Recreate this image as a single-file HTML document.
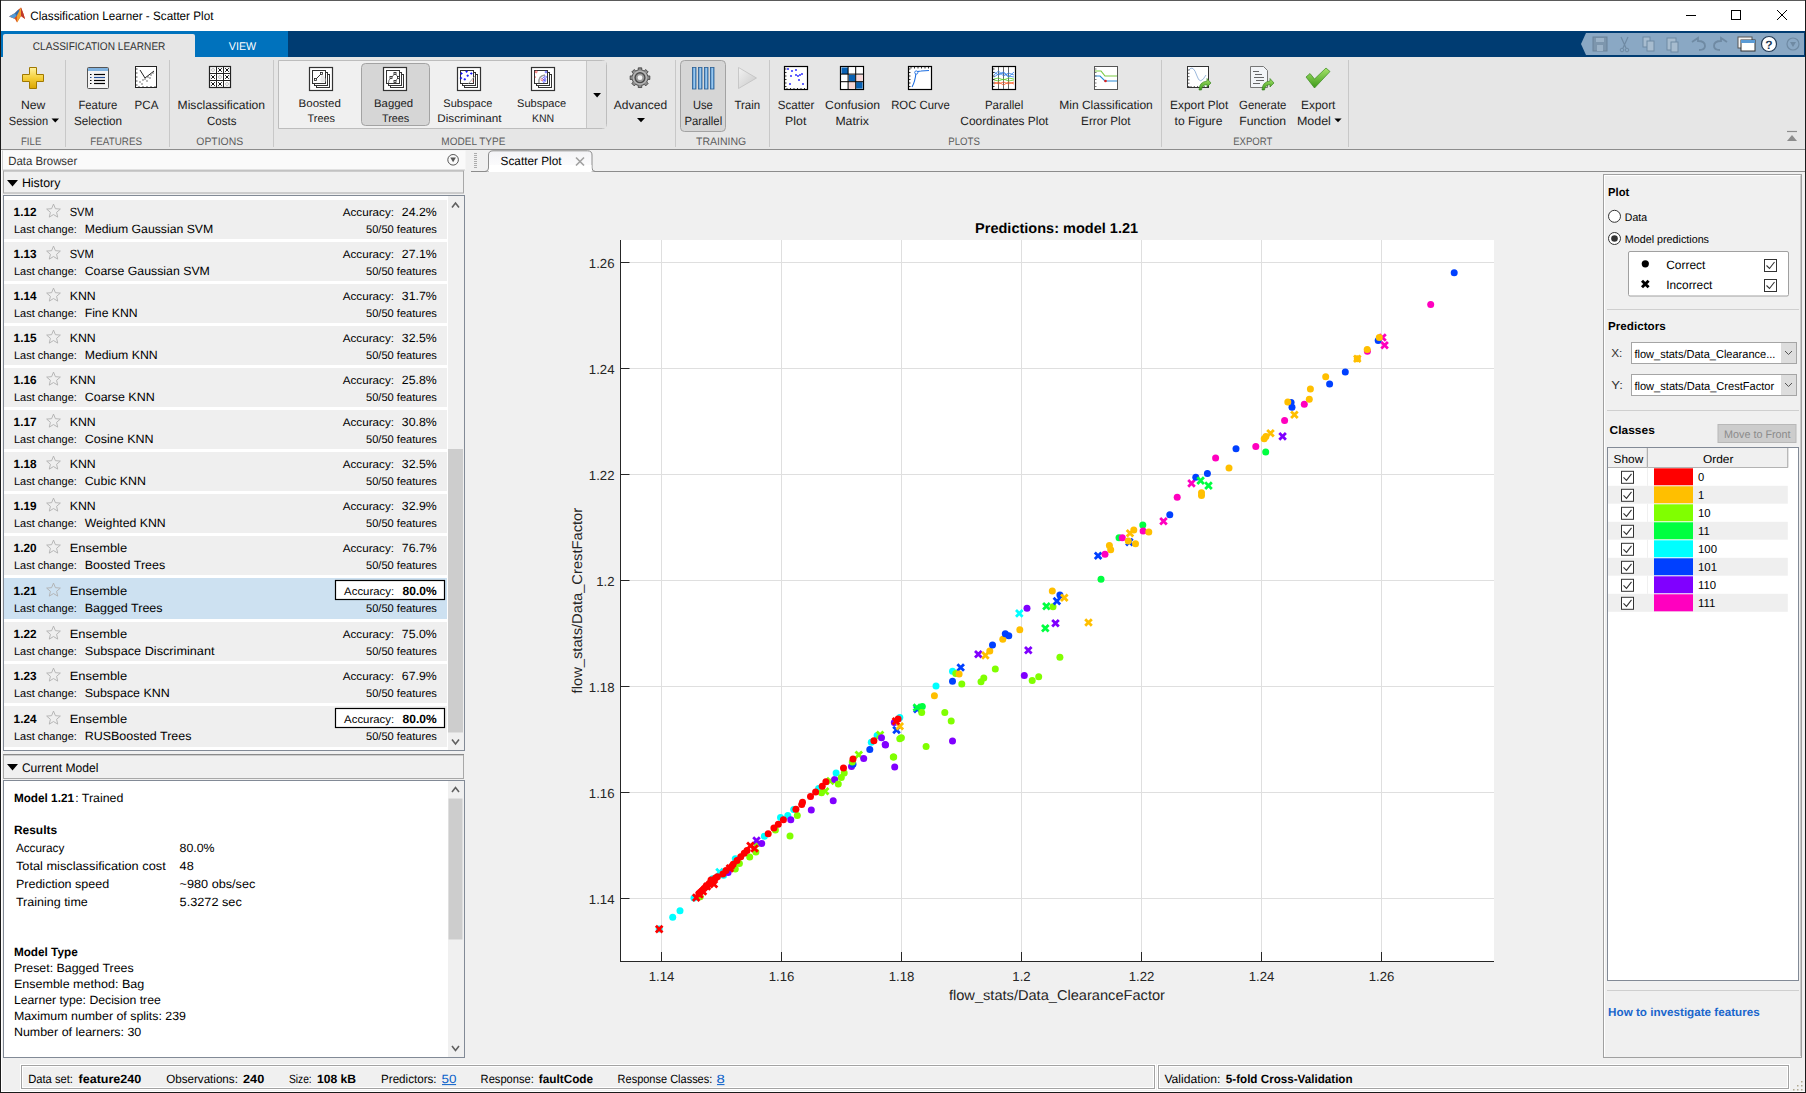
<!DOCTYPE html>
<html><head><meta charset="utf-8"><title>Classification Learner - Scatter Plot</title>
<style>html,body{margin:0;padding:0;width:1806px;height:1093px;overflow:hidden;background:#f0f0f0;font-family:"Liberation Sans",sans-serif}</style>
</head><body>
<svg width="1806" height="1093" viewBox="0 0 1806 1093" style="display:block" text-rendering="geometricPrecision">
<rect x="0" y="0" width="1806" height="1093" fill="#f0f0f0"/>
<rect x="0" y="0" width="1806" height="31" fill="#ffffff"/>
<g>
<path d="M9,16.5 L15,13 L18.5,9.5 L21,7.5 L23.5,14 L25,19 L21,16 L17,22.5 L15,19 Z" fill="#d9531e"/>
<path d="M9,16.5 L15,13 L17,15.5 L14,18.5 Z" fill="#4f9ad8"/>
<path d="M15,13 L18.5,9.5 L20,12 L16.5,16 Z" fill="#2e6fb2"/>
<path d="M21,7.5 L23.5,14 L25,19 L21,16 Z" fill="#c0392b"/>
<path d="M17,15.5 L21,7.5 L21,16 L17,22.5 Z" fill="#f0a030"/>
</g>
<text x="30.3" y="20.2" font-size="12.2" font-weight="normal" fill="#000" font-family="Liberation Sans" textLength="183.1" lengthAdjust="spacingAndGlyphs">Classification Learner - Scatter Plot</text>
<line x1="1686" y1="15.5" x2="1696" y2="15.5" stroke="#000" stroke-width="1"/>
<rect x="1731.5" y="10.5" width="9" height="9" fill="none" stroke="#000" stroke-width="1"/>
<line x1="1777" y1="10" x2="1787" y2="20" stroke="#000" stroke-width="1"/>
<line x1="1787" y1="10" x2="1777" y2="20" stroke="#000" stroke-width="1"/>
<rect x="0" y="31" width="1806" height="26" fill="#003c72"/>
<rect x="1" y="31" width="287" height="26" fill="#0072bd"/>
<path d="M3,57 L3,36 Q3,34 5,34 L193,34 Q195,34 195,36 L195,57 Z" fill="#e6e6e6"/>
<text x="32.8" y="49.9" font-size="11.2" font-weight="normal" fill="#333333" font-family="Liberation Sans" textLength="132.6" lengthAdjust="spacingAndGlyphs">CLASSIFICATION LEARNER</text>
<text x="228.8" y="49.9" font-size="11.2" font-weight="normal" fill="#ffffff" font-family="Liberation Sans" textLength="27.4" lengthAdjust="spacingAndGlyphs">VIEW</text>
<path d="M1581,44 L1586,33 L1804,33 L1804,55 L1586,55 Z" fill="#8aa8c4"/>
<rect x="1593" y="37" width="14" height="14" fill="#7d96ad" stroke="#6a8299" stroke-width="1"/>
<rect x="1596" y="38" width="8" height="4" fill="#9bb2c7"/>
<rect x="1597" y="45" width="6" height="6" fill="#9bb2c7"/>
<path d="M1621,37 L1626,48 M1628,37 L1623,48" fill="none" stroke="#6f8aa3" stroke-width="1.2"/>
<circle cx="1622" cy="50" r="1.8" fill="none" stroke="#6f8aa3" stroke-width="1"/>
<circle cx="1627" cy="50" r="1.8" fill="none" stroke="#6f8aa3" stroke-width="1"/>
<rect x="1643" y="37" width="7" height="10" fill="#a7bccf" stroke="#6f8aa3" stroke-width="1"/>
<rect x="1647" y="41" width="7" height="10" fill="#a7bccf" stroke="#6f8aa3" stroke-width="1"/>
<rect x="1667" y="38" width="9" height="12" fill="#a7bccf" stroke="#6f8aa3" stroke-width="1"/>
<rect x="1671" y="42" width="7" height="10" fill="#a7bccf" stroke="#6f8aa3" stroke-width="1"/>
<path d="M1692,42 L1698,38 L1698,41 Q1705,41 1705,46 Q1705,50 1699,50" fill="none" stroke="#6f8aa3" stroke-width="1.8"/>
<path d="M1727,42 L1721,38 L1721,41 Q1714,41 1714,46 Q1714,50 1720,50" fill="none" stroke="#6f8aa3" stroke-width="1.8"/>
<rect x="1738" y="37" width="14" height="11" fill="#f4f4f4" stroke="#555" stroke-width="1"/>
<rect x="1741" y="40" width="14" height="11" fill="#ffffff" stroke="#333" stroke-width="1"/>
<rect x="1741" y="40" width="14" height="3" fill="#5b9bd5"/>
<circle cx="1769" cy="44" r="7.5" fill="#ffffff" stroke="#223a55" stroke-width="1.2"/>
<text x="1769.0" y="48.5" font-size="12" font-weight="bold" fill="#223a55" font-family="Liberation Sans" text-anchor="middle">?</text>
<circle cx="1793" cy="44" r="6" fill="none" stroke="#6f8aa3" stroke-width="1.2"/>
<path d="M1790,42 L1796,42 L1793,47 Z" fill="#6f8aa3"/>
<rect x="0.5" y="0.5" width="1805" height="1092" fill="none" stroke="#555555" stroke-width="1"/>
<rect x="1" y="57" width="1804" height="92" fill="#e6e6e6"/>
<line x1="1" y1="149.5" x2="1805" y2="149.5" stroke="#8c8c8c" stroke-width="1"/>
<line x1="65.5" y1="60" x2="65.5" y2="147" stroke="#c8c8c8" stroke-width="1"/>
<line x1="169.5" y1="60" x2="169.5" y2="147" stroke="#c8c8c8" stroke-width="1"/>
<line x1="273.5" y1="60" x2="273.5" y2="147" stroke="#c8c8c8" stroke-width="1"/>
<line x1="675.5" y1="60" x2="675.5" y2="147" stroke="#c8c8c8" stroke-width="1"/>
<line x1="769.5" y1="60" x2="769.5" y2="147" stroke="#c8c8c8" stroke-width="1"/>
<line x1="1161.5" y1="60" x2="1161.5" y2="147" stroke="#c8c8c8" stroke-width="1"/>
<line x1="1348.5" y1="60" x2="1348.5" y2="147" stroke="#c8c8c8" stroke-width="1"/>
<text x="21.0" y="144.7" font-size="10.8" font-weight="normal" fill="#5c5c5c" font-family="Liberation Sans" textLength="20.3" lengthAdjust="spacingAndGlyphs">FILE</text>
<text x="90.3" y="144.7" font-size="10.8" font-weight="normal" fill="#5c5c5c" font-family="Liberation Sans" textLength="51.7" lengthAdjust="spacingAndGlyphs">FEATURES</text>
<text x="196.3" y="144.7" font-size="10.8" font-weight="normal" fill="#5c5c5c" font-family="Liberation Sans" textLength="46.9" lengthAdjust="spacingAndGlyphs">OPTIONS</text>
<text x="441.3" y="144.7" font-size="10.8" font-weight="normal" fill="#5c5c5c" font-family="Liberation Sans" textLength="64.1" lengthAdjust="spacingAndGlyphs">MODEL TYPE</text>
<text x="696.0" y="144.7" font-size="10.8" font-weight="normal" fill="#5c5c5c" font-family="Liberation Sans" textLength="50.2" lengthAdjust="spacingAndGlyphs">TRAINING</text>
<text x="948.2" y="144.7" font-size="10.8" font-weight="normal" fill="#5c5c5c" font-family="Liberation Sans" textLength="31.7" lengthAdjust="spacingAndGlyphs">PLOTS</text>
<text x="1233.2" y="144.7" font-size="10.8" font-weight="normal" fill="#5c5c5c" font-family="Liberation Sans" textLength="39.2" lengthAdjust="spacingAndGlyphs">EXPORT</text>
<defs><linearGradient id="gPlus" x1="0" y1="0" x2="0" y2="1"><stop offset="0" stop-color="#fff3a0"/><stop offset="0.5" stop-color="#f5cf3a"/><stop offset="1" stop-color="#d9a400"/></linearGradient><linearGradient id="gBar" x1="0" y1="0" x2="1" y2="0"><stop offset="0" stop-color="#3a7fc0"/><stop offset="0.5" stop-color="#a9d3f5"/><stop offset="1" stop-color="#3a7fc0"/></linearGradient><linearGradient id="gCheck" x1="0" y1="0" x2="0" y2="1"><stop offset="0" stop-color="#a6e36a"/><stop offset="1" stop-color="#3d9a1a"/></linearGradient><radialGradient id="gGear"><stop offset="0.25" stop-color="#eee"/><stop offset="0.45" stop-color="#555"/><stop offset="0.7" stop-color="#999"/><stop offset="1" stop-color="#666"/></radialGradient></defs>
<path d="M29.5,67.5 L36.5,67.5 L36.5,74.5 L43.5,74.5 L43.5,81.5 L36.5,81.5 L36.5,88.5 L29.5,88.5 L29.5,81.5 L22.5,81.5 L22.5,74.5 L29.5,74.5 Z" fill="url(#gPlus)" stroke="#a07800" stroke-width="1"/>
<text x="21.0" y="108.8" font-size="12" font-weight="normal" fill="#222222" font-family="Liberation Sans" textLength="24.3" lengthAdjust="spacingAndGlyphs">New</text>
<text x="8.8" y="124.8" font-size="12" font-weight="normal" fill="#222222" font-family="Liberation Sans" textLength="39.3" lengthAdjust="spacingAndGlyphs">Session</text>
<path d="M51.5,118.5 L59,118.5 L55.25,122.5 Z" fill="#000"/>
<rect x="87.5" y="67.5" width="21" height="21" fill="#f4f4f4" stroke="#555" stroke-width="1" rx="1"/>
<rect x="88" y="68" width="20" height="3" fill="#7fb2e0"/>
<line x1="90" y1="74.5" x2="91.5" y2="74.5" stroke="#000" stroke-width="1"/>
<line x1="94" y1="74.5" x2="105" y2="74.5" stroke="#000" stroke-width="1.2"/>
<line x1="90" y1="77.5" x2="91.5" y2="77.5" stroke="#1f4e9a" stroke-width="1"/>
<line x1="94" y1="77.5" x2="105" y2="77.5" stroke="#1f4e9a" stroke-width="1.2"/>
<line x1="90" y1="80.5" x2="91.5" y2="80.5" stroke="#000" stroke-width="1"/>
<line x1="94" y1="80.5" x2="105" y2="80.5" stroke="#000" stroke-width="1.2"/>
<line x1="90" y1="83.5" x2="91.5" y2="83.5" stroke="#000" stroke-width="1"/>
<line x1="94" y1="83.5" x2="105" y2="83.5" stroke="#000" stroke-width="1.2"/>
<text x="78.4" y="108.8" font-size="12" font-weight="normal" fill="#222222" font-family="Liberation Sans" textLength="39.0" lengthAdjust="spacingAndGlyphs">Feature</text>
<text x="73.9" y="124.8" font-size="12" font-weight="normal" fill="#222222" font-family="Liberation Sans" textLength="48.1" lengthAdjust="spacingAndGlyphs">Selection</text>
<rect x="135.5" y="66.5" width="21" height="21" fill="#ffffff" stroke="#222" stroke-width="1"/>
<line x1="136" y1="69" x2="137.5" y2="69" stroke="#222" stroke-width="0.8"/>
<line x1="139" y1="86" x2="139" y2="87.5" stroke="#222" stroke-width="0.8"/>
<line x1="136" y1="73" x2="137.5" y2="73" stroke="#222" stroke-width="0.8"/>
<line x1="143" y1="86" x2="143" y2="87.5" stroke="#222" stroke-width="0.8"/>
<line x1="136" y1="77" x2="137.5" y2="77" stroke="#222" stroke-width="0.8"/>
<line x1="147" y1="86" x2="147" y2="87.5" stroke="#222" stroke-width="0.8"/>
<line x1="136" y1="81" x2="137.5" y2="81" stroke="#222" stroke-width="0.8"/>
<line x1="151" y1="86" x2="151" y2="87.5" stroke="#222" stroke-width="0.8"/>
<line x1="136" y1="85" x2="137.5" y2="85" stroke="#222" stroke-width="0.8"/>
<line x1="155" y1="86" x2="155" y2="87.5" stroke="#222" stroke-width="0.8"/>
<circle cx="140" cy="82" r="0.9" fill="#9a9a9a"/>
<circle cx="143" cy="80" r="0.9" fill="#9a9a9a"/>
<circle cx="145" cy="79" r="0.9" fill="#9a9a9a"/>
<circle cx="148" cy="77" r="0.9" fill="#9a9a9a"/>
<circle cx="151" cy="75" r="0.9" fill="#9a9a9a"/>
<circle cx="142" cy="84" r="0.9" fill="#9a9a9a"/>
<circle cx="147" cy="81" r="0.9" fill="#9a9a9a"/>
<circle cx="150" cy="78" r="0.9" fill="#9a9a9a"/>
<circle cx="153" cy="73" r="0.9" fill="#9a9a9a"/>
<path d="M140,70 L145,78 L154,71" fill="none" stroke="#222" stroke-width="1"/>
<text x="134.6" y="108.8" font-size="12" font-weight="normal" fill="#222222" font-family="Liberation Sans" textLength="23.8" lengthAdjust="spacingAndGlyphs">PCA</text>
<rect x="209.5" y="66.5" width="21" height="21" fill="#ffffff" stroke="#222" stroke-width="1.2"/>
<line x1="216.5" y1="66.5" x2="216.5" y2="87.5" stroke="#222" stroke-width="1"/>
<line x1="209.5" y1="73.5" x2="230.5" y2="73.5" stroke="#222" stroke-width="1"/>
<line x1="223.5" y1="66.5" x2="223.5" y2="87.5" stroke="#222" stroke-width="1"/>
<line x1="209.5" y1="80.5" x2="230.5" y2="80.5" stroke="#222" stroke-width="1"/>
<circle cx="213" cy="70" r="1.5" fill="none" stroke="#aaa" stroke-width="0.7"/>
<path d="M218.2,68.2 L221.8,71.8 M221.8,68.2 L218.2,71.8" fill="none" stroke="#111" stroke-width="1"/>
<path d="M225.2,68.2 L228.8,71.8 M228.8,68.2 L225.2,71.8" fill="none" stroke="#111" stroke-width="1"/>
<path d="M211.2,75.2 L214.8,78.8 M214.8,75.2 L211.2,78.8" fill="none" stroke="#111" stroke-width="1"/>
<circle cx="220" cy="77" r="1.5" fill="none" stroke="#aaa" stroke-width="0.7"/>
<path d="M225.2,75.2 L228.8,78.8 M228.8,75.2 L225.2,78.8" fill="none" stroke="#111" stroke-width="1"/>
<path d="M211.2,82.2 L214.8,85.8 M214.8,82.2 L211.2,85.8" fill="none" stroke="#111" stroke-width="1"/>
<path d="M218.2,82.2 L221.8,85.8 M221.8,82.2 L218.2,85.8" fill="none" stroke="#111" stroke-width="1"/>
<circle cx="227" cy="84" r="1.5" fill="none" stroke="#aaa" stroke-width="0.7"/>
<text x="177.6" y="108.8" font-size="12" font-weight="normal" fill="#222222" font-family="Liberation Sans" textLength="87.5" lengthAdjust="spacingAndGlyphs">Misclassification</text>
<text x="207.0" y="124.8" font-size="12" font-weight="normal" fill="#222222" font-family="Liberation Sans" textLength="29.4" lengthAdjust="spacingAndGlyphs">Costs</text>
<path d="M278.5,128.5 L278.5,60.5 L602.5,60.5 Q606.5,60.5 606.5,64.5 L606.5,124.5 Q606.5,128.5 602.5,128.5 Z" fill="#f0f0f0" stroke="#bdbdbd" stroke-width="1"/>
<rect x="586.5" y="61" width="19.5" height="67" fill="#e4e4e4"/>
<line x1="586.5" y1="61" x2="586.5" y2="128" stroke="#c6c6c6" stroke-width="1"/>
<path d="M593.2,93 L601,93 L597.1,97.4 Z" fill="#000"/>
<rect x="361.5" y="63.5" width="68" height="62" fill="#d6d6d6" stroke="#a3a3a3" stroke-width="1" rx="4"/>
<rect x="309.5" y="67.5" width="23" height="23" fill="#ffffff" stroke="#333" stroke-width="1.2"/>
<rect x="316.5" y="74.5" width="13" height="13" fill="#ffffff" stroke="#333" stroke-width="1"/>
<rect x="314.5" y="72.5" width="13" height="13" fill="#ffffff" stroke="#333" stroke-width="1"/>
<rect x="312.5" y="70.5" width="13" height="13" fill="#ffffff" stroke="#333" stroke-width="1"/>
<path d="M321.5,74.5 Q326,76 325.5,81.5 L322,82.5 Q319,81 321.5,74.5 Z" fill="#e9e9e9"/>
<line x1="315.5" y1="79.5" x2="321.5" y2="73.5" stroke="#222" stroke-width="0.9"/>
<rect x="314.5" y="78.5" width="2" height="2" fill="#fff" stroke="#222" stroke-width="0.8"/>
<rect x="320.5" y="72.5" width="2" height="2" fill="#fff" stroke="#222" stroke-width="0.8"/>
<rect x="383.5" y="67.5" width="23" height="23" fill="#ffffff" stroke="#333" stroke-width="1.2"/>
<rect x="390.5" y="74.5" width="13" height="13" fill="#ffffff" stroke="#333" stroke-width="1"/>
<rect x="388.5" y="72.5" width="13" height="13" fill="#ffffff" stroke="#333" stroke-width="1"/>
<rect x="386.5" y="70.5" width="13" height="13" fill="#ffffff" stroke="#333" stroke-width="1"/>
<path d="M391.5,77.5 L395,73.5 L398.5,77.5 L395,81.5 M391.5,77.5 Q388,80 388.5,83" fill="none" stroke="#333" stroke-width="0.7"/>
<rect x="390" y="76.5" width="2" height="2" fill="#fff" stroke="#222" stroke-width="0.8"/>
<rect x="394" y="72.5" width="2" height="2" fill="#fff" stroke="#222" stroke-width="0.8"/>
<rect x="397.5" y="76.5" width="2" height="2" fill="#fff" stroke="#222" stroke-width="0.8"/>
<rect x="394" y="80.5" width="2" height="2" fill="#fff" stroke="#222" stroke-width="0.8"/>
<rect x="457.5" y="67.5" width="23" height="23" fill="#ffffff" stroke="#333" stroke-width="1.2"/>
<rect x="464.5" y="74.5" width="13" height="13" fill="#ffffff" stroke="#333" stroke-width="1"/>
<rect x="462.5" y="72.5" width="13" height="13" fill="#ffffff" stroke="#333" stroke-width="1"/>
<rect x="460.5" y="70.5" width="13" height="13" fill="#ffffff" stroke="#333" stroke-width="1"/>
<path d="M468.5,83.5 L475,76" fill="none" stroke="#aaa" stroke-width="1"/>
<path d="M465.40000000000003,71.6 L467.8,71.6 M466.6,70.39999999999999 L466.6,72.8" fill="none" stroke="#1010ff" stroke-width="0.9"/>
<path d="M470.1,73.5 L472.5,73.5 M471.3,72.3 L471.3,74.7" fill="none" stroke="#1010ff" stroke-width="0.9"/>
<path d="M466.5,75.7 L468.9,75.7 M467.7,74.5 L467.7,76.9" fill="none" stroke="#1010ff" stroke-width="0.9"/>
<path d="M460.3,73.5 L462.7,73.5 M461.5,72.3 L461.5,74.7" fill="none" stroke="#1010ff" stroke-width="0.9"/>
<path d="M463.6,79.3 L466.0,79.3 M464.8,78.1 L464.8,80.5" fill="none" stroke="#1010ff" stroke-width="0.9"/>
<path d="M459.8,78.1 L462.2,78.1 M461,76.89999999999999 L461,79.3" fill="none" stroke="#1010ff" stroke-width="0.9"/>
<circle cx="473" cy="81" r="0.6" fill="#e33"/>
<rect x="531.5" y="67.5" width="23" height="23" fill="#ffffff" stroke="#333" stroke-width="1.2"/>
<rect x="538.5" y="74.5" width="13" height="13" fill="#ffffff" stroke="#333" stroke-width="1"/>
<rect x="536.5" y="72.5" width="13" height="13" fill="#ffffff" stroke="#333" stroke-width="1"/>
<rect x="534.5" y="70.5" width="13" height="13" fill="#ffffff" stroke="#333" stroke-width="1"/>
<path d="M539,83 Q538,76 545,75" fill="none" stroke="#999" stroke-width="1.3"/>
<path d="M543.5,77.3 L544.7,78.5 L543.5,79.7 L542.3,78.5 Z" fill="none" stroke="#1a1aff" stroke-width="0.6"/>
<path d="M545,78.8 L546.2,80 L545,81.2 L543.8,80 Z" fill="none" stroke="#1a1aff" stroke-width="0.6"/>
<path d="M544,80.3 L545.2,81.5 L544,82.7 L542.8,81.5 Z" fill="none" stroke="#1a1aff" stroke-width="0.6"/>
<path d="M545.5,75.8 L546.7,77 L545.5,78.2 L544.3,77 Z" fill="none" stroke="#1a1aff" stroke-width="0.6"/>
<path d="M542,78.5 L543.2,79.7 L542,80.9 L540.8,79.7 Z" fill="none" stroke="#e33" stroke-width="0.6"/>
<circle cx="536.2" cy="71.8" r="1" fill="none" stroke="#e33" stroke-width="0.7"/>
<circle cx="546" cy="72" r="0.9" fill="none" stroke="#1a1aff" stroke-width="0.6"/>
<circle cx="535.5" cy="77" r="0.6" fill="#e33"/>
<text x="298.6" y="106.9" font-size="11" font-weight="normal" fill="#222222" font-family="Liberation Sans" textLength="42.3" lengthAdjust="spacingAndGlyphs">Boosted</text>
<text x="307.6" y="121.8" font-size="11" font-weight="normal" fill="#222222" font-family="Liberation Sans" textLength="27.3" lengthAdjust="spacingAndGlyphs">Trees</text>
<text x="374.0" y="106.9" font-size="11" font-weight="normal" fill="#222222" font-family="Liberation Sans" textLength="39.2" lengthAdjust="spacingAndGlyphs">Bagged</text>
<text x="382.0" y="121.8" font-size="11" font-weight="normal" fill="#222222" font-family="Liberation Sans" textLength="27.2" lengthAdjust="spacingAndGlyphs">Trees</text>
<text x="443.3" y="106.9" font-size="11" font-weight="normal" fill="#222222" font-family="Liberation Sans" textLength="49.1" lengthAdjust="spacingAndGlyphs">Subspace</text>
<text x="437.3" y="121.8" font-size="11" font-weight="normal" fill="#222222" font-family="Liberation Sans" textLength="64.1" lengthAdjust="spacingAndGlyphs">Discriminant</text>
<text x="517.0" y="106.9" font-size="11" font-weight="normal" fill="#222222" font-family="Liberation Sans" textLength="49.2" lengthAdjust="spacingAndGlyphs">Subspace</text>
<text x="532.0" y="121.8" font-size="11" font-weight="normal" fill="#222222" font-family="Liberation Sans" textLength="22.2" lengthAdjust="spacingAndGlyphs">KNN</text>
<g>
<path d="M649.84,75.91 L649.84,79.49 L647.82,79.39 L646.72,82.04 L648.22,83.39 L645.69,85.92 L644.34,84.42 L641.69,85.52 L641.79,87.54 L638.21,87.54 L638.31,85.52 L635.66,84.42 L634.31,85.92 L631.78,83.39 L633.28,82.04 L632.18,79.39 L630.16,79.49 L630.16,75.91 L632.18,76.01 L633.28,73.36 L631.78,72.01 L634.31,69.48 L635.66,70.98 L638.31,69.88 L638.21,67.86 L641.79,67.86 L641.69,69.88 L644.34,70.98 L645.69,69.48 L648.22,72.01 L646.72,73.36 L647.82,76.01 Z" fill="#8a8a8a" stroke="#3a3a3a" stroke-width="0.8"/>
<circle cx="640" cy="77.7" r="7.2" fill="#b5b5b5"/>
<circle cx="640" cy="77.7" r="5.6" fill="#4a4a4a"/>
<circle cx="640" cy="77.7" r="4.2" fill="#9a9a9a"/>
<circle cx="640" cy="77.7" r="2.4" fill="#f2f2f2"/>
</g>
<text x="613.8" y="108.8" font-size="12" font-weight="normal" fill="#222222" font-family="Liberation Sans" textLength="53.3" lengthAdjust="spacingAndGlyphs">Advanced</text>
<path d="M637,118 L645,118 L641,122.3 Z" fill="#000"/>
<rect x="680.5" y="60.5" width="45" height="71" fill="#d6d6d6" stroke="#a3a3a3" stroke-width="1" rx="4"/>
<rect x="692.5" y="67.5" width="3.5" height="21.5" fill="url(#gBar)" stroke="#2a5f95" stroke-width="0.8"/>
<rect x="698.5" y="67.5" width="3.5" height="21.5" fill="url(#gBar)" stroke="#2a5f95" stroke-width="0.8"/>
<rect x="704.5" y="67.5" width="3.5" height="21.5" fill="url(#gBar)" stroke="#2a5f95" stroke-width="0.8"/>
<rect x="710.5" y="67.5" width="3.5" height="21.5" fill="url(#gBar)" stroke="#2a5f95" stroke-width="0.8"/>
<text x="693.0" y="108.8" font-size="12" font-weight="normal" fill="#222222" font-family="Liberation Sans" textLength="19.8" lengthAdjust="spacingAndGlyphs">Use</text>
<text x="684.4" y="124.8" font-size="12" font-weight="normal" fill="#222222" font-family="Liberation Sans" textLength="37.8" lengthAdjust="spacingAndGlyphs">Parallel</text>
<defs><linearGradient id="gTri" x1="0" y1="0" x2="1" y2="1"><stop offset="0" stop-color="#f2f2f2"/><stop offset="1" stop-color="#c8c8c8"/></linearGradient></defs>
<path d="M738.5,67.5 L756.5,78 L738.5,88.5 Z" fill="url(#gTri)" stroke="#c0c0c0" stroke-width="0.8"/>
<text x="734.4" y="108.8" font-size="12" font-weight="normal" fill="#222222" font-family="Liberation Sans" textLength="25.7" lengthAdjust="spacingAndGlyphs">Train</text>
<rect x="784.5" y="66.5" width="23" height="23" fill="#ffffff" stroke="#000" stroke-width="1.2"/>
<line x1="785" y1="69.0" x2="786.5" y2="69.0" stroke="#000" stroke-width="0.8"/>
<line x1="787.0" y1="88" x2="787.0" y2="89.5" stroke="#000" stroke-width="0.8"/>
<line x1="785" y1="72.5" x2="786.5" y2="72.5" stroke="#000" stroke-width="0.8"/>
<line x1="790.5" y1="88" x2="790.5" y2="89.5" stroke="#000" stroke-width="0.8"/>
<line x1="785" y1="76.0" x2="786.5" y2="76.0" stroke="#000" stroke-width="0.8"/>
<line x1="794.0" y1="88" x2="794.0" y2="89.5" stroke="#000" stroke-width="0.8"/>
<line x1="785" y1="79.5" x2="786.5" y2="79.5" stroke="#000" stroke-width="0.8"/>
<line x1="797.5" y1="88" x2="797.5" y2="89.5" stroke="#000" stroke-width="0.8"/>
<line x1="785" y1="83.0" x2="786.5" y2="83.0" stroke="#000" stroke-width="0.8"/>
<line x1="801.0" y1="88" x2="801.0" y2="89.5" stroke="#000" stroke-width="0.8"/>
<line x1="785" y1="86.5" x2="786.5" y2="86.5" stroke="#000" stroke-width="0.8"/>
<line x1="804.5" y1="88" x2="804.5" y2="89.5" stroke="#000" stroke-width="0.8"/>
<circle cx="788" cy="69" r="0.9" fill="#1a1aff"/>
<circle cx="792" cy="71" r="0.9" fill="#1a1aff"/>
<circle cx="796" cy="70" r="0.9" fill="#1a1aff"/>
<circle cx="791" cy="76" r="0.9" fill="#1a1aff"/>
<circle cx="796" cy="75" r="0.9" fill="#1a1aff"/>
<circle cx="798" cy="76" r="0.9" fill="#1a1aff"/>
<circle cx="800" cy="75" r="0.9" fill="#1a1aff"/>
<circle cx="802" cy="74" r="0.9" fill="#1a1aff"/>
<circle cx="799" cy="80" r="0.9" fill="#1a1aff"/>
<circle cx="790" cy="84" r="0.9" fill="#1a1aff"/>
<circle cx="803" cy="84" r="0.9" fill="#1a1aff"/>
<text x="777.8" y="108.8" font-size="12" font-weight="normal" fill="#222222" font-family="Liberation Sans" textLength="36.6" lengthAdjust="spacingAndGlyphs">Scatter</text>
<text x="785.1" y="124.8" font-size="12" font-weight="normal" fill="#222222" font-family="Liberation Sans" textLength="21.3" lengthAdjust="spacingAndGlyphs">Plot</text>
<rect x="840.5" y="66.5" width="23" height="23" fill="#ffffff" stroke="#000" stroke-width="1.2"/>
<rect x="841.5" y="67.5" width="6.5" height="6.5" fill="#0a62b4"/>
<rect x="848.8" y="67.5" width="6.5" height="6.5" fill="#fff"/>
<rect x="856.1" y="67.5" width="6.5" height="6.5" fill="#fff"/>
<rect x="841.5" y="74.8" width="6.5" height="6.5" fill="#fff"/>
<rect x="848.8" y="74.8" width="6.5" height="6.5" fill="#0a62b4"/>
<rect x="856.1" y="74.8" width="6.5" height="6.5" fill="#f8d7d7"/>
<rect x="841.5" y="82.1" width="6.5" height="6.5" fill="#fff"/>
<rect x="848.8" y="82.1" width="6.5" height="6.5" fill="#f8d7d7"/>
<rect x="856.1" y="82.1" width="6.5" height="6.5" fill="#0a62b4"/>
<line x1="848.1" y1="66.5" x2="848.1" y2="89.5" stroke="#000" stroke-width="1"/>
<line x1="840.5" y1="74.1" x2="863.5" y2="74.1" stroke="#000" stroke-width="1"/>
<line x1="855.7" y1="66.5" x2="855.7" y2="89.5" stroke="#000" stroke-width="1"/>
<line x1="840.5" y1="81.7" x2="863.5" y2="81.7" stroke="#000" stroke-width="1"/>
<text x="825.1" y="108.8" font-size="12" font-weight="normal" fill="#222222" font-family="Liberation Sans" textLength="54.9" lengthAdjust="spacingAndGlyphs">Confusion</text>
<text x="835.4" y="124.8" font-size="12" font-weight="normal" fill="#222222" font-family="Liberation Sans" textLength="33.4" lengthAdjust="spacingAndGlyphs">Matrix</text>
<rect x="908.5" y="66.5" width="23" height="23" fill="#ffffff" stroke="#000" stroke-width="1.2"/>
<line x1="909" y1="69.0" x2="910.5" y2="69.0" stroke="#000" stroke-width="0.8"/>
<line x1="911.0" y1="67" x2="911.0" y2="68.5" stroke="#000" stroke-width="0.8"/>
<line x1="909" y1="72.5" x2="910.5" y2="72.5" stroke="#000" stroke-width="0.8"/>
<line x1="914.5" y1="67" x2="914.5" y2="68.5" stroke="#000" stroke-width="0.8"/>
<line x1="909" y1="76.0" x2="910.5" y2="76.0" stroke="#000" stroke-width="0.8"/>
<line x1="918.0" y1="67" x2="918.0" y2="68.5" stroke="#000" stroke-width="0.8"/>
<line x1="909" y1="79.5" x2="910.5" y2="79.5" stroke="#000" stroke-width="0.8"/>
<line x1="921.5" y1="67" x2="921.5" y2="68.5" stroke="#000" stroke-width="0.8"/>
<line x1="909" y1="83.0" x2="910.5" y2="83.0" stroke="#000" stroke-width="0.8"/>
<line x1="925.0" y1="67" x2="925.0" y2="68.5" stroke="#000" stroke-width="0.8"/>
<line x1="909" y1="86.5" x2="910.5" y2="86.5" stroke="#000" stroke-width="0.8"/>
<line x1="928.5" y1="67" x2="928.5" y2="68.5" stroke="#000" stroke-width="0.8"/>
<path d="M912,87 Q915,82 916,73 Q917,71 921,71 L929,70.5" fill="none" stroke="#1f6fe0" stroke-width="1.1"/>
<circle cx="916.3" cy="72.5" r="1.6" fill="#fff" stroke="#1f6fe0" stroke-width="0.9"/>
<text x="891.2" y="108.8" font-size="12" font-weight="normal" fill="#222222" font-family="Liberation Sans" textLength="58.5" lengthAdjust="spacingAndGlyphs">ROC Curve</text>
<rect x="992.5" y="66.5" width="23" height="23" fill="#ffffff" stroke="#000" stroke-width="1.2"/>
<line x1="998.5" y1="67" x2="998.5" y2="89" stroke="#555" stroke-width="0.9"/>
<line x1="1003.5" y1="67" x2="1003.5" y2="89" stroke="#555" stroke-width="0.9"/>
<line x1="1008.5" y1="67" x2="1008.5" y2="89" stroke="#555" stroke-width="0.9"/>
<path d="M994,72 L998.5,75 L1003.5,73 L1008.5,77 L1014,72" fill="none" stroke="#2f7fe8" stroke-width="0.8"/>
<path d="M994,75 L998.5,71 L1003.5,76 L1008.5,73 L1014,75" fill="none" stroke="#2f7fe8" stroke-width="0.8"/>
<path d="M994,77 L998.5,74 L1003.5,72 L1008.5,76 L1014,77" fill="none" stroke="#2f7fe8" stroke-width="0.8"/>
<path d="M994,79 L998.5,78 L1003.5,80 L1008.5,78 L1014,79" fill="none" stroke="#5ccf2e" stroke-width="0.8"/>
<path d="M994,80 L998.5,81 L1003.5,79 L1008.5,81 L1014,80" fill="none" stroke="#5ccf2e" stroke-width="0.8"/>
<path d="M994,82 L998.5,84 L1003.5,82 L1008.5,84 L1014,82" fill="none" stroke="#ff5a1f" stroke-width="0.8"/>
<path d="M994,84 L998.5,82 L1003.5,85 L1008.5,82 L1014,84" fill="none" stroke="#ff5a1f" stroke-width="0.8"/>
<line x1="993" y1="69.0" x2="994.5" y2="69.0" stroke="#000" stroke-width="0.8"/>
<line x1="993" y1="72.5" x2="994.5" y2="72.5" stroke="#000" stroke-width="0.8"/>
<line x1="993" y1="76.0" x2="994.5" y2="76.0" stroke="#000" stroke-width="0.8"/>
<line x1="993" y1="79.5" x2="994.5" y2="79.5" stroke="#000" stroke-width="0.8"/>
<line x1="993" y1="83.0" x2="994.5" y2="83.0" stroke="#000" stroke-width="0.8"/>
<line x1="993" y1="86.5" x2="994.5" y2="86.5" stroke="#000" stroke-width="0.8"/>
<text x="984.9" y="108.8" font-size="12" font-weight="normal" fill="#222222" font-family="Liberation Sans" textLength="38.3" lengthAdjust="spacingAndGlyphs">Parallel</text>
<text x="960.3" y="124.6" font-size="12" font-weight="normal" fill="#222222" font-family="Liberation Sans" textLength="88.1" lengthAdjust="spacingAndGlyphs">Coordinates Plot</text>
<rect x="1094.5" y="66.5" width="23" height="23" fill="#ffffff" stroke="#555" stroke-width="1"/>
<path d="M1095,71 L1101,71 L1105,76 L1117,76" fill="none" stroke="#7ac943" stroke-width="1.2"/>
<path d="M1095,76 L1100,76 L1105,81 L1117,81" fill="none" stroke="#2a8ad4" stroke-width="1.2"/>
<circle cx="1105.5" cy="81" r="1.3" fill="#d22"/>
<line x1="1095" y1="69.0" x2="1096.5" y2="69.0" stroke="#555" stroke-width="0.8"/>
<line x1="1095" y1="72.5" x2="1096.5" y2="72.5" stroke="#555" stroke-width="0.8"/>
<line x1="1095" y1="76.0" x2="1096.5" y2="76.0" stroke="#555" stroke-width="0.8"/>
<line x1="1095" y1="79.5" x2="1096.5" y2="79.5" stroke="#555" stroke-width="0.8"/>
<line x1="1095" y1="83.0" x2="1096.5" y2="83.0" stroke="#555" stroke-width="0.8"/>
<line x1="1095" y1="86.5" x2="1096.5" y2="86.5" stroke="#555" stroke-width="0.8"/>
<text x="1059.2" y="108.8" font-size="12" font-weight="normal" fill="#222222" font-family="Liberation Sans" textLength="93.6" lengthAdjust="spacingAndGlyphs">Min Classification</text>
<text x="1081.1" y="124.6" font-size="12" font-weight="normal" fill="#222222" font-family="Liberation Sans" textLength="49.3" lengthAdjust="spacingAndGlyphs">Error Plot</text>
<rect x="1187.5" y="66.5" width="21" height="21" fill="#ffffff" stroke="#333" stroke-width="1"/>
<path d="M1189,70 Q1193,64 1197,76 Q1200,86 1206,75" fill="none" stroke="#9cb9dc" stroke-width="1"/>
<line x1="1188" y1="70.0" x2="1189.5" y2="70.0" stroke="#333" stroke-width="0.8"/>
<line x1="1191.0" y1="86" x2="1191.0" y2="87.5" stroke="#333" stroke-width="0.8"/>
<line x1="1188" y1="73.3" x2="1189.5" y2="73.3" stroke="#333" stroke-width="0.8"/>
<line x1="1194.3" y1="86" x2="1194.3" y2="87.5" stroke="#333" stroke-width="0.8"/>
<line x1="1188" y1="76.6" x2="1189.5" y2="76.6" stroke="#333" stroke-width="0.8"/>
<line x1="1197.6" y1="86" x2="1197.6" y2="87.5" stroke="#333" stroke-width="0.8"/>
<line x1="1188" y1="79.9" x2="1189.5" y2="79.9" stroke="#333" stroke-width="0.8"/>
<line x1="1200.9" y1="86" x2="1200.9" y2="87.5" stroke="#333" stroke-width="0.8"/>
<line x1="1188" y1="83.2" x2="1189.5" y2="83.2" stroke="#333" stroke-width="0.8"/>
<line x1="1204.2" y1="86" x2="1204.2" y2="87.5" stroke="#333" stroke-width="0.8"/>
<line x1="1188" y1="86.5" x2="1189.5" y2="86.5" stroke="#333" stroke-width="0.8"/>
<line x1="1207.5" y1="86" x2="1207.5" y2="87.5" stroke="#333" stroke-width="0.8"/>
<path d="M1199,90 Q1199,82 1207,81 L1207,78.5 L1211,83 L1207,87 L1207,84.5 Q1202,85 1201.5,90 Z" fill="url(#gCheck)" stroke="#2b7a14" stroke-width="0.6"/>
<text x="1170.1" y="108.8" font-size="12" font-weight="normal" fill="#222222" font-family="Liberation Sans" textLength="58.1" lengthAdjust="spacingAndGlyphs">Export Plot</text>
<text x="1174.6" y="124.5" font-size="12" font-weight="normal" fill="#222222" font-family="Liberation Sans" textLength="47.8" lengthAdjust="spacingAndGlyphs">to Figure</text>
<path d="M1250.5,66.5 L1263.5,66.5 L1267.5,70.5 L1267.5,87.5 L1250.5,87.5 Z" fill="#f2f4f7" stroke="#777" stroke-width="1"/>
<line x1="1253" y1="71.5" x2="1259" y2="71.5" stroke="#555" stroke-width="0.9"/>
<line x1="1255" y1="74.5" x2="1262" y2="74.5" stroke="#555" stroke-width="0.9"/>
<line x1="1254" y1="77.5" x2="1264" y2="77.5" stroke="#555" stroke-width="0.9"/>
<line x1="1256" y1="80.5" x2="1264" y2="80.5" stroke="#555" stroke-width="0.9"/>
<line x1="1253" y1="83.5" x2="1260" y2="83.5" stroke="#555" stroke-width="0.9"/>
<path d="M1262,90 Q1262,82 1270,81 L1270,78.5 L1274,83 L1270,87 L1270,84.5 Q1265,85 1264.5,90 Z" fill="url(#gCheck)" stroke="#2b7a14" stroke-width="0.6"/>
<text x="1239.1" y="108.8" font-size="12" font-weight="normal" fill="#222222" font-family="Liberation Sans" textLength="47.3" lengthAdjust="spacingAndGlyphs">Generate</text>
<text x="1239.3" y="124.5" font-size="12" font-weight="normal" fill="#222222" font-family="Liberation Sans" textLength="46.8" lengthAdjust="spacingAndGlyphs">Function</text>
<path d="M1306,77 L1310,73.5 L1314.5,79 L1326,68 L1330,71.5 L1314.5,88 Z" fill="url(#gCheck)" stroke="#3a8a1e" stroke-width="0.7"/>
<text x="1301.1" y="108.8" font-size="12" font-weight="normal" fill="#222222" font-family="Liberation Sans" textLength="34.3" lengthAdjust="spacingAndGlyphs">Export</text>
<text x="1296.9" y="124.5" font-size="12" font-weight="normal" fill="#222222" font-family="Liberation Sans" textLength="34.0" lengthAdjust="spacingAndGlyphs">Model</text>
<path d="M1334.4,118.5 L1341.6,118.5 L1338,122.3 Z" fill="#000"/>
<line x1="1787" y1="131.5" x2="1797" y2="131.5" stroke="#8c8c8c" stroke-width="1.2"/>
<path d="M1787,141 L1797,141 L1792,135 Z" fill="#8c8c8c"/>
<rect x="1" y="150" width="465" height="908" fill="#f0f0f0"/>
<rect x="2.5" y="150.5" width="463" height="19.5" fill="#fafafa"/>
<line x1="2.5" y1="170" x2="465" y2="170" stroke="#c8c8c8" stroke-width="1"/>
<line x1="2.5" y1="150.5" x2="2.5" y2="170" stroke="#d0d0d0" stroke-width="1"/>
<text x="8.2" y="164.6" font-size="12" font-weight="normal" fill="#333333" font-family="Liberation Sans" textLength="69.0" lengthAdjust="spacingAndGlyphs">Data Browser</text>
<circle cx="453.1" cy="159.8" r="5.3" fill="none" stroke="#555" stroke-width="1"/>
<path d="M450.3,157.6 L455.9,157.6 L453.1,162.3 Z" fill="#555"/>
<rect x="3.5" y="171" width="460" height="22" fill="#f0f0f0" stroke="#a8a8a8" stroke-width="1"/>
<path d="M7,180 L18,180 L12.5,186.5 Z" fill="#000"/>
<text x="21.9" y="187.3" font-size="12.4" font-weight="normal" fill="#000" font-family="Liberation Sans" textLength="38.5" lengthAdjust="spacingAndGlyphs">History</text>
<rect x="3.5" y="195.5" width="461" height="555" fill="#ffffff" stroke="#828a96" stroke-width="1"/>
<rect x="448" y="196" width="16" height="554" fill="#f0f0f0"/>
<rect x="448" y="449" width="15" height="283.5" fill="#cdcdcd"/>
<path d="M452,207.5 L455.5,203 L459,207.5" fill="none" stroke="#606060" stroke-width="1.6"/>
<path d="M452,739.5 L455.5,744 L459,739.5" fill="none" stroke="#606060" stroke-width="1.6"/>
<rect x="4" y="200" width="443" height="39" fill="#efefef"/>
<text x="13.6" y="216.0" font-size="12" font-weight="bold" fill="#000" font-family="Liberation Sans" textLength="22.9" lengthAdjust="spacingAndGlyphs">1.12</text>
<path d="M53.50,204.10 L55.40,208.68 L60.35,209.08 L56.58,212.30 L57.73,217.12 L53.50,214.54 L49.27,217.12 L50.42,212.30 L46.65,209.08 L51.60,208.68 Z" fill="none" stroke="#b0b0b0" stroke-width="0.9"/>
<text x="69.7" y="216.0" font-size="12" font-weight="normal" fill="#000" font-family="Liberation Sans" textLength="24.1" lengthAdjust="spacingAndGlyphs">SVM</text>
<text x="14.0" y="233.0" font-size="11" font-weight="normal" fill="#000" font-family="Liberation Sans" textLength="62.8" lengthAdjust="spacingAndGlyphs">Last change:</text>
<text x="84.7" y="233.0" font-size="12" font-weight="normal" fill="#000" font-family="Liberation Sans" textLength="128.5" lengthAdjust="spacingAndGlyphs">Medium Gaussian SVM</text>
<text x="342.7" y="216.0" font-size="11" font-weight="normal" fill="#000" font-family="Liberation Sans" textLength="51.4" lengthAdjust="spacingAndGlyphs">Accuracy:</text>
<text x="401.8" y="216.0" font-size="12" font-weight="normal" fill="#000" font-family="Liberation Sans" textLength="34.9" lengthAdjust="spacingAndGlyphs">24.2%</text>
<text x="366.0" y="233.0" font-size="11" font-weight="normal" fill="#000" font-family="Liberation Sans" textLength="70.9" lengthAdjust="spacingAndGlyphs">50/50 features</text>
<rect x="4" y="242" width="443" height="39" fill="#efefef"/>
<text x="13.6" y="258.0" font-size="12" font-weight="bold" fill="#000" font-family="Liberation Sans" textLength="22.9" lengthAdjust="spacingAndGlyphs">1.13</text>
<path d="M53.50,246.10 L55.40,250.68 L60.35,251.08 L56.58,254.30 L57.73,259.12 L53.50,256.54 L49.27,259.12 L50.42,254.30 L46.65,251.08 L51.60,250.68 Z" fill="none" stroke="#b0b0b0" stroke-width="0.9"/>
<text x="69.7" y="258.0" font-size="12" font-weight="normal" fill="#000" font-family="Liberation Sans" textLength="24.1" lengthAdjust="spacingAndGlyphs">SVM</text>
<text x="14.0" y="275.0" font-size="11" font-weight="normal" fill="#000" font-family="Liberation Sans" textLength="62.8" lengthAdjust="spacingAndGlyphs">Last change:</text>
<text x="84.7" y="275.0" font-size="12" font-weight="normal" fill="#000" font-family="Liberation Sans" textLength="125.2" lengthAdjust="spacingAndGlyphs">Coarse Gaussian SVM</text>
<text x="342.7" y="258.0" font-size="11" font-weight="normal" fill="#000" font-family="Liberation Sans" textLength="51.4" lengthAdjust="spacingAndGlyphs">Accuracy:</text>
<text x="401.8" y="258.0" font-size="12" font-weight="normal" fill="#000" font-family="Liberation Sans" textLength="34.9" lengthAdjust="spacingAndGlyphs">27.1%</text>
<text x="366.0" y="275.0" font-size="11" font-weight="normal" fill="#000" font-family="Liberation Sans" textLength="70.9" lengthAdjust="spacingAndGlyphs">50/50 features</text>
<rect x="4" y="284" width="443" height="39" fill="#efefef"/>
<text x="13.6" y="300.0" font-size="12" font-weight="bold" fill="#000" font-family="Liberation Sans" textLength="22.9" lengthAdjust="spacingAndGlyphs">1.14</text>
<path d="M53.50,288.10 L55.40,292.68 L60.35,293.08 L56.58,296.30 L57.73,301.12 L53.50,298.54 L49.27,301.12 L50.42,296.30 L46.65,293.08 L51.60,292.68 Z" fill="none" stroke="#b0b0b0" stroke-width="0.9"/>
<text x="69.7" y="300.0" font-size="12" font-weight="normal" fill="#000" font-family="Liberation Sans" textLength="26.0" lengthAdjust="spacingAndGlyphs">KNN</text>
<text x="14.0" y="317.0" font-size="11" font-weight="normal" fill="#000" font-family="Liberation Sans" textLength="62.8" lengthAdjust="spacingAndGlyphs">Last change:</text>
<text x="84.7" y="317.0" font-size="12" font-weight="normal" fill="#000" font-family="Liberation Sans" textLength="53.0" lengthAdjust="spacingAndGlyphs">Fine KNN</text>
<text x="342.7" y="300.0" font-size="11" font-weight="normal" fill="#000" font-family="Liberation Sans" textLength="51.4" lengthAdjust="spacingAndGlyphs">Accuracy:</text>
<text x="401.8" y="300.0" font-size="12" font-weight="normal" fill="#000" font-family="Liberation Sans" textLength="34.9" lengthAdjust="spacingAndGlyphs">31.7%</text>
<text x="366.0" y="317.0" font-size="11" font-weight="normal" fill="#000" font-family="Liberation Sans" textLength="70.9" lengthAdjust="spacingAndGlyphs">50/50 features</text>
<rect x="4" y="326" width="443" height="39" fill="#efefef"/>
<text x="13.6" y="342.0" font-size="12" font-weight="bold" fill="#000" font-family="Liberation Sans" textLength="22.9" lengthAdjust="spacingAndGlyphs">1.15</text>
<path d="M53.50,330.10 L55.40,334.68 L60.35,335.08 L56.58,338.30 L57.73,343.12 L53.50,340.54 L49.27,343.12 L50.42,338.30 L46.65,335.08 L51.60,334.68 Z" fill="none" stroke="#b0b0b0" stroke-width="0.9"/>
<text x="69.7" y="342.0" font-size="12" font-weight="normal" fill="#000" font-family="Liberation Sans" textLength="26.0" lengthAdjust="spacingAndGlyphs">KNN</text>
<text x="14.0" y="359.0" font-size="11" font-weight="normal" fill="#000" font-family="Liberation Sans" textLength="62.8" lengthAdjust="spacingAndGlyphs">Last change:</text>
<text x="84.7" y="359.0" font-size="12" font-weight="normal" fill="#000" font-family="Liberation Sans" textLength="73.0" lengthAdjust="spacingAndGlyphs">Medium KNN</text>
<text x="342.7" y="342.0" font-size="11" font-weight="normal" fill="#000" font-family="Liberation Sans" textLength="51.4" lengthAdjust="spacingAndGlyphs">Accuracy:</text>
<text x="401.8" y="342.0" font-size="12" font-weight="normal" fill="#000" font-family="Liberation Sans" textLength="34.9" lengthAdjust="spacingAndGlyphs">32.5%</text>
<text x="366.0" y="359.0" font-size="11" font-weight="normal" fill="#000" font-family="Liberation Sans" textLength="70.9" lengthAdjust="spacingAndGlyphs">50/50 features</text>
<rect x="4" y="368" width="443" height="39" fill="#efefef"/>
<text x="13.6" y="384.0" font-size="12" font-weight="bold" fill="#000" font-family="Liberation Sans" textLength="22.9" lengthAdjust="spacingAndGlyphs">1.16</text>
<path d="M53.50,372.10 L55.40,376.68 L60.35,377.08 L56.58,380.30 L57.73,385.12 L53.50,382.54 L49.27,385.12 L50.42,380.30 L46.65,377.08 L51.60,376.68 Z" fill="none" stroke="#b0b0b0" stroke-width="0.9"/>
<text x="69.7" y="384.0" font-size="12" font-weight="normal" fill="#000" font-family="Liberation Sans" textLength="26.0" lengthAdjust="spacingAndGlyphs">KNN</text>
<text x="14.0" y="401.0" font-size="11" font-weight="normal" fill="#000" font-family="Liberation Sans" textLength="62.8" lengthAdjust="spacingAndGlyphs">Last change:</text>
<text x="84.7" y="401.0" font-size="12" font-weight="normal" fill="#000" font-family="Liberation Sans" textLength="70.0" lengthAdjust="spacingAndGlyphs">Coarse KNN</text>
<text x="342.7" y="384.0" font-size="11" font-weight="normal" fill="#000" font-family="Liberation Sans" textLength="51.4" lengthAdjust="spacingAndGlyphs">Accuracy:</text>
<text x="401.8" y="384.0" font-size="12" font-weight="normal" fill="#000" font-family="Liberation Sans" textLength="34.9" lengthAdjust="spacingAndGlyphs">25.8%</text>
<text x="366.0" y="401.0" font-size="11" font-weight="normal" fill="#000" font-family="Liberation Sans" textLength="70.9" lengthAdjust="spacingAndGlyphs">50/50 features</text>
<rect x="4" y="410" width="443" height="39" fill="#efefef"/>
<text x="13.6" y="426.0" font-size="12" font-weight="bold" fill="#000" font-family="Liberation Sans" textLength="22.9" lengthAdjust="spacingAndGlyphs">1.17</text>
<path d="M53.50,414.10 L55.40,418.68 L60.35,419.08 L56.58,422.30 L57.73,427.12 L53.50,424.54 L49.27,427.12 L50.42,422.30 L46.65,419.08 L51.60,418.68 Z" fill="none" stroke="#b0b0b0" stroke-width="0.9"/>
<text x="69.7" y="426.0" font-size="12" font-weight="normal" fill="#000" font-family="Liberation Sans" textLength="26.0" lengthAdjust="spacingAndGlyphs">KNN</text>
<text x="14.0" y="443.0" font-size="11" font-weight="normal" fill="#000" font-family="Liberation Sans" textLength="62.8" lengthAdjust="spacingAndGlyphs">Last change:</text>
<text x="84.7" y="443.0" font-size="12" font-weight="normal" fill="#000" font-family="Liberation Sans" textLength="68.9" lengthAdjust="spacingAndGlyphs">Cosine KNN</text>
<text x="342.7" y="426.0" font-size="11" font-weight="normal" fill="#000" font-family="Liberation Sans" textLength="51.4" lengthAdjust="spacingAndGlyphs">Accuracy:</text>
<text x="401.8" y="426.0" font-size="12" font-weight="normal" fill="#000" font-family="Liberation Sans" textLength="34.9" lengthAdjust="spacingAndGlyphs">30.8%</text>
<text x="366.0" y="443.0" font-size="11" font-weight="normal" fill="#000" font-family="Liberation Sans" textLength="70.9" lengthAdjust="spacingAndGlyphs">50/50 features</text>
<rect x="4" y="452" width="443" height="39" fill="#efefef"/>
<text x="13.6" y="468.0" font-size="12" font-weight="bold" fill="#000" font-family="Liberation Sans" textLength="22.9" lengthAdjust="spacingAndGlyphs">1.18</text>
<path d="M53.50,456.10 L55.40,460.68 L60.35,461.08 L56.58,464.30 L57.73,469.12 L53.50,466.54 L49.27,469.12 L50.42,464.30 L46.65,461.08 L51.60,460.68 Z" fill="none" stroke="#b0b0b0" stroke-width="0.9"/>
<text x="69.7" y="468.0" font-size="12" font-weight="normal" fill="#000" font-family="Liberation Sans" textLength="26.0" lengthAdjust="spacingAndGlyphs">KNN</text>
<text x="14.0" y="485.0" font-size="11" font-weight="normal" fill="#000" font-family="Liberation Sans" textLength="62.8" lengthAdjust="spacingAndGlyphs">Last change:</text>
<text x="84.7" y="485.0" font-size="12" font-weight="normal" fill="#000" font-family="Liberation Sans" textLength="61.2" lengthAdjust="spacingAndGlyphs">Cubic KNN</text>
<text x="342.7" y="468.0" font-size="11" font-weight="normal" fill="#000" font-family="Liberation Sans" textLength="51.4" lengthAdjust="spacingAndGlyphs">Accuracy:</text>
<text x="401.8" y="468.0" font-size="12" font-weight="normal" fill="#000" font-family="Liberation Sans" textLength="34.9" lengthAdjust="spacingAndGlyphs">32.5%</text>
<text x="366.0" y="485.0" font-size="11" font-weight="normal" fill="#000" font-family="Liberation Sans" textLength="70.9" lengthAdjust="spacingAndGlyphs">50/50 features</text>
<rect x="4" y="494" width="443" height="39" fill="#efefef"/>
<text x="13.6" y="510.0" font-size="12" font-weight="bold" fill="#000" font-family="Liberation Sans" textLength="22.9" lengthAdjust="spacingAndGlyphs">1.19</text>
<path d="M53.50,498.10 L55.40,502.68 L60.35,503.08 L56.58,506.30 L57.73,511.12 L53.50,508.54 L49.27,511.12 L50.42,506.30 L46.65,503.08 L51.60,502.68 Z" fill="none" stroke="#b0b0b0" stroke-width="0.9"/>
<text x="69.7" y="510.0" font-size="12" font-weight="normal" fill="#000" font-family="Liberation Sans" textLength="26.0" lengthAdjust="spacingAndGlyphs">KNN</text>
<text x="14.0" y="527.0" font-size="11" font-weight="normal" fill="#000" font-family="Liberation Sans" textLength="62.8" lengthAdjust="spacingAndGlyphs">Last change:</text>
<text x="84.7" y="527.0" font-size="12" font-weight="normal" fill="#000" font-family="Liberation Sans" textLength="81.0" lengthAdjust="spacingAndGlyphs">Weighted KNN</text>
<text x="342.7" y="510.0" font-size="11" font-weight="normal" fill="#000" font-family="Liberation Sans" textLength="51.4" lengthAdjust="spacingAndGlyphs">Accuracy:</text>
<text x="401.8" y="510.0" font-size="12" font-weight="normal" fill="#000" font-family="Liberation Sans" textLength="34.9" lengthAdjust="spacingAndGlyphs">32.9%</text>
<text x="366.0" y="527.0" font-size="11" font-weight="normal" fill="#000" font-family="Liberation Sans" textLength="70.9" lengthAdjust="spacingAndGlyphs">50/50 features</text>
<rect x="4" y="536" width="443" height="39" fill="#efefef"/>
<text x="13.6" y="552.0" font-size="12" font-weight="bold" fill="#000" font-family="Liberation Sans" textLength="22.9" lengthAdjust="spacingAndGlyphs">1.20</text>
<path d="M53.50,540.10 L55.40,544.68 L60.35,545.08 L56.58,548.30 L57.73,553.12 L53.50,550.54 L49.27,553.12 L50.42,548.30 L46.65,545.08 L51.60,544.68 Z" fill="none" stroke="#b0b0b0" stroke-width="0.9"/>
<text x="69.7" y="552.0" font-size="12" font-weight="normal" fill="#000" font-family="Liberation Sans" textLength="57.5" lengthAdjust="spacingAndGlyphs">Ensemble</text>
<text x="14.0" y="569.0" font-size="11" font-weight="normal" fill="#000" font-family="Liberation Sans" textLength="62.8" lengthAdjust="spacingAndGlyphs">Last change:</text>
<text x="84.7" y="569.0" font-size="12" font-weight="normal" fill="#000" font-family="Liberation Sans" textLength="80.5" lengthAdjust="spacingAndGlyphs">Boosted Trees</text>
<text x="342.7" y="552.0" font-size="11" font-weight="normal" fill="#000" font-family="Liberation Sans" textLength="51.4" lengthAdjust="spacingAndGlyphs">Accuracy:</text>
<text x="401.8" y="552.0" font-size="12" font-weight="normal" fill="#000" font-family="Liberation Sans" textLength="34.9" lengthAdjust="spacingAndGlyphs">76.7%</text>
<text x="366.0" y="569.0" font-size="11" font-weight="normal" fill="#000" font-family="Liberation Sans" textLength="70.9" lengthAdjust="spacingAndGlyphs">50/50 features</text>
<rect x="4" y="578" width="443" height="41" fill="#cde1f1"/>
<text x="13.6" y="595.0" font-size="12" font-weight="bold" fill="#000" font-family="Liberation Sans" textLength="22.9" lengthAdjust="spacingAndGlyphs">1.21</text>
<path d="M53.50,583.10 L55.40,587.68 L60.35,588.08 L56.58,591.30 L57.73,596.12 L53.50,593.54 L49.27,596.12 L50.42,591.30 L46.65,588.08 L51.60,587.68 Z" fill="none" stroke="#b0b0b0" stroke-width="0.9"/>
<text x="69.7" y="595.0" font-size="12" font-weight="normal" fill="#000" font-family="Liberation Sans" textLength="57.5" lengthAdjust="spacingAndGlyphs">Ensemble</text>
<text x="14.0" y="612.0" font-size="11" font-weight="normal" fill="#000" font-family="Liberation Sans" textLength="62.8" lengthAdjust="spacingAndGlyphs">Last change:</text>
<text x="84.7" y="612.0" font-size="12" font-weight="normal" fill="#000" font-family="Liberation Sans" textLength="77.9" lengthAdjust="spacingAndGlyphs">Bagged Trees</text>
<rect x="335.5" y="580.5" width="109" height="19" fill="#ffffff" stroke="#000" stroke-width="1.2"/>
<text x="344.1" y="595.0" font-size="11" font-weight="normal" fill="#000" font-family="Liberation Sans" textLength="50.0" lengthAdjust="spacingAndGlyphs">Accuracy:</text>
<text x="402.6" y="595.0" font-size="12" font-weight="bold" fill="#000" font-family="Liberation Sans" textLength="34.1" lengthAdjust="spacingAndGlyphs">80.0%</text>
<text x="366.0" y="612.0" font-size="11" font-weight="normal" fill="#000" font-family="Liberation Sans" textLength="70.9" lengthAdjust="spacingAndGlyphs">50/50 features</text>
<rect x="4" y="622" width="443" height="39" fill="#efefef"/>
<text x="13.6" y="638.0" font-size="12" font-weight="bold" fill="#000" font-family="Liberation Sans" textLength="22.9" lengthAdjust="spacingAndGlyphs">1.22</text>
<path d="M53.50,626.10 L55.40,630.68 L60.35,631.08 L56.58,634.30 L57.73,639.12 L53.50,636.54 L49.27,639.12 L50.42,634.30 L46.65,631.08 L51.60,630.68 Z" fill="none" stroke="#b0b0b0" stroke-width="0.9"/>
<text x="69.7" y="638.0" font-size="12" font-weight="normal" fill="#000" font-family="Liberation Sans" textLength="57.5" lengthAdjust="spacingAndGlyphs">Ensemble</text>
<text x="14.0" y="655.0" font-size="11" font-weight="normal" fill="#000" font-family="Liberation Sans" textLength="62.8" lengthAdjust="spacingAndGlyphs">Last change:</text>
<text x="84.7" y="655.0" font-size="12" font-weight="normal" fill="#000" font-family="Liberation Sans" textLength="129.8" lengthAdjust="spacingAndGlyphs">Subspace Discriminant</text>
<text x="342.7" y="638.0" font-size="11" font-weight="normal" fill="#000" font-family="Liberation Sans" textLength="51.4" lengthAdjust="spacingAndGlyphs">Accuracy:</text>
<text x="401.8" y="638.0" font-size="12" font-weight="normal" fill="#000" font-family="Liberation Sans" textLength="34.9" lengthAdjust="spacingAndGlyphs">75.0%</text>
<text x="366.0" y="655.0" font-size="11" font-weight="normal" fill="#000" font-family="Liberation Sans" textLength="70.9" lengthAdjust="spacingAndGlyphs">50/50 features</text>
<rect x="4" y="664" width="443" height="39" fill="#efefef"/>
<text x="13.6" y="680.0" font-size="12" font-weight="bold" fill="#000" font-family="Liberation Sans" textLength="22.9" lengthAdjust="spacingAndGlyphs">1.23</text>
<path d="M53.50,668.10 L55.40,672.68 L60.35,673.08 L56.58,676.30 L57.73,681.12 L53.50,678.54 L49.27,681.12 L50.42,676.30 L46.65,673.08 L51.60,672.68 Z" fill="none" stroke="#b0b0b0" stroke-width="0.9"/>
<text x="69.7" y="680.0" font-size="12" font-weight="normal" fill="#000" font-family="Liberation Sans" textLength="57.5" lengthAdjust="spacingAndGlyphs">Ensemble</text>
<text x="14.0" y="697.0" font-size="11" font-weight="normal" fill="#000" font-family="Liberation Sans" textLength="62.8" lengthAdjust="spacingAndGlyphs">Last change:</text>
<text x="84.7" y="697.0" font-size="12" font-weight="normal" fill="#000" font-family="Liberation Sans" textLength="85.1" lengthAdjust="spacingAndGlyphs">Subspace KNN</text>
<text x="342.7" y="680.0" font-size="11" font-weight="normal" fill="#000" font-family="Liberation Sans" textLength="51.4" lengthAdjust="spacingAndGlyphs">Accuracy:</text>
<text x="401.8" y="680.0" font-size="12" font-weight="normal" fill="#000" font-family="Liberation Sans" textLength="34.9" lengthAdjust="spacingAndGlyphs">67.9%</text>
<text x="366.0" y="697.0" font-size="11" font-weight="normal" fill="#000" font-family="Liberation Sans" textLength="70.9" lengthAdjust="spacingAndGlyphs">50/50 features</text>
<rect x="4" y="706" width="443" height="41" fill="#efefef"/>
<text x="13.6" y="723.0" font-size="12" font-weight="bold" fill="#000" font-family="Liberation Sans" textLength="22.9" lengthAdjust="spacingAndGlyphs">1.24</text>
<path d="M53.50,711.10 L55.40,715.68 L60.35,716.08 L56.58,719.30 L57.73,724.12 L53.50,721.54 L49.27,724.12 L50.42,719.30 L46.65,716.08 L51.60,715.68 Z" fill="none" stroke="#b0b0b0" stroke-width="0.9"/>
<text x="69.7" y="723.0" font-size="12" font-weight="normal" fill="#000" font-family="Liberation Sans" textLength="57.5" lengthAdjust="spacingAndGlyphs">Ensemble</text>
<text x="14.0" y="740.0" font-size="11" font-weight="normal" fill="#000" font-family="Liberation Sans" textLength="62.8" lengthAdjust="spacingAndGlyphs">Last change:</text>
<text x="84.7" y="740.0" font-size="12" font-weight="normal" fill="#000" font-family="Liberation Sans" textLength="106.7" lengthAdjust="spacingAndGlyphs">RUSBoosted Trees</text>
<rect x="335.5" y="708.5" width="109" height="19" fill="#ffffff" stroke="#000" stroke-width="1.2"/>
<text x="344.1" y="723.0" font-size="11" font-weight="normal" fill="#000" font-family="Liberation Sans" textLength="50.0" lengthAdjust="spacingAndGlyphs">Accuracy:</text>
<text x="402.6" y="723.0" font-size="12" font-weight="bold" fill="#000" font-family="Liberation Sans" textLength="34.1" lengthAdjust="spacingAndGlyphs">80.0%</text>
<text x="366.0" y="740.0" font-size="11" font-weight="normal" fill="#000" font-family="Liberation Sans" textLength="70.9" lengthAdjust="spacingAndGlyphs">50/50 features</text>
<line x1="3" y1="754.5" x2="464" y2="754.5" stroke="#6e6e6e" stroke-width="1"/>
<rect x="3.5" y="755" width="460" height="23.5" fill="#f0f0f0" stroke="#a8a8a8" stroke-width="1"/>
<path d="M7,764 L18,764 L12.5,770.5 Z" fill="#000"/>
<text x="21.9" y="772.3" font-size="12.4" font-weight="normal" fill="#000" font-family="Liberation Sans" textLength="76.5" lengthAdjust="spacingAndGlyphs">Current Model</text>
<rect x="3.5" y="780.5" width="461" height="277" fill="#ffffff" stroke="#828a96" stroke-width="1"/>
<rect x="448" y="781" width="16" height="276" fill="#f0f0f0"/>
<rect x="448.5" y="798.5" width="14" height="141" fill="#cdcdcd"/>
<path d="M452,792 L455.5,787.5 L459,792" fill="none" stroke="#606060" stroke-width="1.6"/>
<path d="M452,1046 L455.5,1050.5 L459,1046" fill="none" stroke="#606060" stroke-width="1.6"/>
<text x="13.9" y="801.7" font-size="12" font-weight="bold" fill="#000" font-family="Liberation Sans" textLength="60.1" lengthAdjust="spacingAndGlyphs">Model 1.21</text>
<text x="75.2" y="801.7" font-size="12" font-weight="normal" fill="#000" font-family="Liberation Sans" textLength="48.1" lengthAdjust="spacingAndGlyphs">: Trained</text>
<text x="13.9" y="834.4" font-size="12" font-weight="bold" fill="#000" font-family="Liberation Sans" textLength="43.2" lengthAdjust="spacingAndGlyphs">Results</text>
<text x="15.9" y="851.6" font-size="12" font-weight="normal" fill="#000" font-family="Liberation Sans" textLength="48.4" lengthAdjust="spacingAndGlyphs">Accuracy</text>
<text x="179.6" y="851.6" font-size="12" font-weight="normal" fill="#000" font-family="Liberation Sans" textLength="35.0" lengthAdjust="spacingAndGlyphs">80.0%</text>
<text x="15.9" y="870.2" font-size="12" font-weight="normal" fill="#000" font-family="Liberation Sans" textLength="149.8" lengthAdjust="spacingAndGlyphs">Total misclassification cost</text>
<text x="179.6" y="870.2" font-size="12" font-weight="normal" fill="#000" font-family="Liberation Sans" textLength="14.1" lengthAdjust="spacingAndGlyphs">48</text>
<text x="15.9" y="888.3" font-size="12" font-weight="normal" fill="#000" font-family="Liberation Sans" textLength="93.3" lengthAdjust="spacingAndGlyphs">Prediction speed</text>
<text x="179.6" y="888.3" font-size="12" font-weight="normal" fill="#000" font-family="Liberation Sans" textLength="75.7" lengthAdjust="spacingAndGlyphs">~980 obs/sec</text>
<text x="15.9" y="906.0" font-size="12" font-weight="normal" fill="#000" font-family="Liberation Sans" textLength="71.9" lengthAdjust="spacingAndGlyphs">Training time</text>
<text x="179.6" y="906.0" font-size="12" font-weight="normal" fill="#000" font-family="Liberation Sans" textLength="62.2" lengthAdjust="spacingAndGlyphs">5.3272 sec</text>
<text x="13.9" y="956.1" font-size="12" font-weight="bold" fill="#000" font-family="Liberation Sans" textLength="63.8" lengthAdjust="spacingAndGlyphs">Model Type</text>
<text x="13.9" y="971.9" font-size="12" font-weight="normal" fill="#000" font-family="Liberation Sans" textLength="119.7" lengthAdjust="spacingAndGlyphs">Preset: Bagged Trees</text>
<text x="13.9" y="988.2" font-size="12" font-weight="normal" fill="#000" font-family="Liberation Sans" textLength="130.3" lengthAdjust="spacingAndGlyphs">Ensemble method: Bag</text>
<text x="13.9" y="1004.0" font-size="12" font-weight="normal" fill="#000" font-family="Liberation Sans" textLength="146.9" lengthAdjust="spacingAndGlyphs">Learner type: Decision tree</text>
<text x="13.9" y="1020.0" font-size="12" font-weight="normal" fill="#000" font-family="Liberation Sans" textLength="172.1" lengthAdjust="spacingAndGlyphs">Maximum number of splits: 239</text>
<text x="13.9" y="1035.7" font-size="12" font-weight="normal" fill="#000" font-family="Liberation Sans" textLength="127.4" lengthAdjust="spacingAndGlyphs">Number of learners: 30</text>
<line x1="474" y1="153.5" x2="477" y2="153.5" stroke="#9a9a9a" stroke-width="0.8"/>
<line x1="474" y1="155.5" x2="477" y2="155.5" stroke="#9a9a9a" stroke-width="0.8"/>
<line x1="474" y1="157.5" x2="477" y2="157.5" stroke="#9a9a9a" stroke-width="0.8"/>
<line x1="474" y1="159.5" x2="477" y2="159.5" stroke="#9a9a9a" stroke-width="0.8"/>
<line x1="474" y1="161.5" x2="477" y2="161.5" stroke="#9a9a9a" stroke-width="0.8"/>
<line x1="474" y1="163.5" x2="477" y2="163.5" stroke="#9a9a9a" stroke-width="0.8"/>
<line x1="474" y1="165.5" x2="477" y2="165.5" stroke="#9a9a9a" stroke-width="0.8"/>
<line x1="474" y1="167.5" x2="477" y2="167.5" stroke="#9a9a9a" stroke-width="0.8"/>
<line x1="471" y1="171.5" x2="1806" y2="171.5" stroke="#8c8c8c" stroke-width="1"/>
<defs><linearGradient id="gTab" x1="0" y1="0" x2="0" y2="1"><stop offset="0" stop-color="#f3f3f6"/><stop offset="1" stop-color="#ffffff"/></linearGradient></defs>
<path d="M471,171.5 L485,171.5 Q488.5,171.5 488.5,168 L488.5,155 Q488.5,150.8 493,150.8 L587.5,150.8 Q592,150.8 592,155 L592,168 Q592,171.5 595.5,171.5" fill="url(#gTab)" stroke="#8c8c8c" stroke-width="1"/>
<rect x="489" y="165" width="102.5" height="7" fill="#ffffff"/>
<text x="500.6" y="164.7" font-size="12" font-weight="normal" fill="#000" font-family="Liberation Sans" textLength="60.9" lengthAdjust="spacingAndGlyphs">Scatter Plot</text>
<path d="M576,157.5 L584,165.5 M584,157.5 L576,165.5" fill="none" stroke="#a0a0a0" stroke-width="1.6"/>
<rect x="620.5" y="240" width="873.5" height="721" fill="#ffffff"/>
<line x1="661.5" y1="240" x2="661.5" y2="961" stroke="#dfdfdf" stroke-width="1"/>
<line x1="620.5" y1="898.5" x2="1494" y2="898.5" stroke="#dfdfdf" stroke-width="1"/>
<line x1="781.5" y1="240" x2="781.5" y2="961" stroke="#dfdfdf" stroke-width="1"/>
<line x1="620.5" y1="792.5" x2="1494" y2="792.5" stroke="#dfdfdf" stroke-width="1"/>
<line x1="901.5" y1="240" x2="901.5" y2="961" stroke="#dfdfdf" stroke-width="1"/>
<line x1="620.5" y1="686.5" x2="1494" y2="686.5" stroke="#dfdfdf" stroke-width="1"/>
<line x1="1021.5" y1="240" x2="1021.5" y2="961" stroke="#dfdfdf" stroke-width="1"/>
<line x1="620.5" y1="580.5" x2="1494" y2="580.5" stroke="#dfdfdf" stroke-width="1"/>
<line x1="1141.5" y1="240" x2="1141.5" y2="961" stroke="#dfdfdf" stroke-width="1"/>
<line x1="620.5" y1="474.5" x2="1494" y2="474.5" stroke="#dfdfdf" stroke-width="1"/>
<line x1="1261.5" y1="240" x2="1261.5" y2="961" stroke="#dfdfdf" stroke-width="1"/>
<line x1="620.5" y1="368.5" x2="1494" y2="368.5" stroke="#dfdfdf" stroke-width="1"/>
<line x1="1381.5" y1="240" x2="1381.5" y2="961" stroke="#dfdfdf" stroke-width="1"/>
<line x1="620.5" y1="262.5" x2="1494" y2="262.5" stroke="#dfdfdf" stroke-width="1"/>
<line x1="620.5" y1="240" x2="620.5" y2="961.5" stroke="#262626" stroke-width="1"/>
<line x1="620" y1="961.5" x2="1494" y2="961.5" stroke="#262626" stroke-width="1"/>
<line x1="661.5" y1="961" x2="661.5" y2="952" stroke="#262626" stroke-width="1"/>
<line x1="620.5" y1="898.5" x2="629.5" y2="898.5" stroke="#262626" stroke-width="1"/>
<text x="661.5" y="980.6" font-size="13.2" font-weight="normal" fill="#262626" font-family="Liberation Sans" text-anchor="middle">1.14</text>
<text x="614.5" y="903.9" font-size="13.2" font-weight="normal" fill="#262626" font-family="Liberation Sans" text-anchor="end">1.14</text>
<line x1="781.5" y1="961" x2="781.5" y2="952" stroke="#262626" stroke-width="1"/>
<line x1="620.5" y1="792.5" x2="629.5" y2="792.5" stroke="#262626" stroke-width="1"/>
<text x="781.5" y="980.6" font-size="13.2" font-weight="normal" fill="#262626" font-family="Liberation Sans" text-anchor="middle">1.16</text>
<text x="614.5" y="797.9" font-size="13.2" font-weight="normal" fill="#262626" font-family="Liberation Sans" text-anchor="end">1.16</text>
<line x1="901.5" y1="961" x2="901.5" y2="952" stroke="#262626" stroke-width="1"/>
<line x1="620.5" y1="686.5" x2="629.5" y2="686.5" stroke="#262626" stroke-width="1"/>
<text x="901.5" y="980.6" font-size="13.2" font-weight="normal" fill="#262626" font-family="Liberation Sans" text-anchor="middle">1.18</text>
<text x="614.5" y="691.9" font-size="13.2" font-weight="normal" fill="#262626" font-family="Liberation Sans" text-anchor="end">1.18</text>
<line x1="1021.5" y1="961" x2="1021.5" y2="952" stroke="#262626" stroke-width="1"/>
<line x1="620.5" y1="580.5" x2="629.5" y2="580.5" stroke="#262626" stroke-width="1"/>
<text x="1021.5" y="980.6" font-size="13.2" font-weight="normal" fill="#262626" font-family="Liberation Sans" text-anchor="middle">1.2</text>
<text x="614.5" y="585.9" font-size="13.2" font-weight="normal" fill="#262626" font-family="Liberation Sans" text-anchor="end">1.2</text>
<line x1="1141.5" y1="961" x2="1141.5" y2="952" stroke="#262626" stroke-width="1"/>
<line x1="620.5" y1="474.5" x2="629.5" y2="474.5" stroke="#262626" stroke-width="1"/>
<text x="1141.5" y="980.6" font-size="13.2" font-weight="normal" fill="#262626" font-family="Liberation Sans" text-anchor="middle">1.22</text>
<text x="614.5" y="479.9" font-size="13.2" font-weight="normal" fill="#262626" font-family="Liberation Sans" text-anchor="end">1.22</text>
<line x1="1261.5" y1="961" x2="1261.5" y2="952" stroke="#262626" stroke-width="1"/>
<line x1="620.5" y1="368.5" x2="629.5" y2="368.5" stroke="#262626" stroke-width="1"/>
<text x="1261.5" y="980.6" font-size="13.2" font-weight="normal" fill="#262626" font-family="Liberation Sans" text-anchor="middle">1.24</text>
<text x="614.5" y="373.9" font-size="13.2" font-weight="normal" fill="#262626" font-family="Liberation Sans" text-anchor="end">1.24</text>
<line x1="1381.5" y1="961" x2="1381.5" y2="952" stroke="#262626" stroke-width="1"/>
<line x1="620.5" y1="262.5" x2="629.5" y2="262.5" stroke="#262626" stroke-width="1"/>
<text x="1381.5" y="980.6" font-size="13.2" font-weight="normal" fill="#262626" font-family="Liberation Sans" text-anchor="middle">1.26</text>
<text x="614.5" y="267.9" font-size="13.2" font-weight="normal" fill="#262626" font-family="Liberation Sans" text-anchor="end">1.26</text>
<text x="975.1" y="232.7" font-size="14.3" font-weight="bold" fill="#000" font-family="Liberation Sans" textLength="163.0" lengthAdjust="spacingAndGlyphs">Predictions: model 1.21</text>
<text x="948.9" y="1000.3" font-size="14.2" font-weight="normal" fill="#262626" font-family="Liberation Sans" textLength="216.1" lengthAdjust="spacingAndGlyphs">flow_stats/Data_ClearanceFactor</text>
<g transform="translate(581.6,693) rotate(-90)">
<text x="-0.4" y="0.0" font-size="14.2" font-weight="normal" fill="#262626" font-family="Liberation Sans" textLength="185.6" lengthAdjust="spacingAndGlyphs">flow_stats/Data_CrestFactor</text>
</g>
<g clip-path="url(#plotclip)">
<defs><clipPath id="plotclip"><rect x="620.5" y="240" width="873.5" height="721"/></clipPath></defs>
<circle cx="659.2" cy="929.1" r="3.5" fill="#00ffff"/>
<circle cx="672.7" cy="917.2" r="3.5" fill="#00ffff"/>
<circle cx="680.0" cy="910.8" r="3.5" fill="#00ffff"/>
<circle cx="694.0" cy="898.0" r="3.5" fill="#00ffff"/>
<circle cx="700.2" cy="896.7" r="3.5" fill="#80ff00"/>
<circle cx="712.6" cy="878.7" r="3.5" fill="#00ffff"/>
<path d="M716.2,868.7 L722.8,875.3 M722.8,868.7 L716.2,875.3" fill="none" stroke="#00ffff" stroke-width="2.8"/>
<circle cx="723.6" cy="875.3" r="3.5" fill="#00ffff"/>
<circle cx="728.1" cy="872.5" r="3.5" fill="#8000ff"/>
<circle cx="735.3" cy="869.1" r="3.5" fill="#80ff00"/>
<circle cx="739.4" cy="863.6" r="3.5" fill="#80ff00"/>
<circle cx="735.3" cy="858.8" r="3.5" fill="#00ffff"/>
<circle cx="749.7" cy="857.1" r="3.5" fill="#80ff00"/>
<circle cx="755.9" cy="852.0" r="3.5" fill="#80ff00"/>
<circle cx="756.9" cy="843.7" r="3.5" fill="#80ff00"/>
<path d="M753.2,837.2 L759.8,843.8 M759.8,837.2 L753.2,843.8" fill="none" stroke="#8000ff" stroke-width="2.8"/>
<circle cx="761.7" cy="843.4" r="3.5" fill="#8000ff"/>
<circle cx="764.4" cy="836.2" r="3.5" fill="#00ffff"/>
<circle cx="775.4" cy="830.1" r="3.5" fill="#80ff00"/>
<circle cx="790.0" cy="836.0" r="3.5" fill="#80ff00"/>
<circle cx="780.5" cy="817.6" r="3.5" fill="#00ffff"/>
<circle cx="787.8" cy="815.5" r="3.5" fill="#00ffff"/>
<circle cx="790.8" cy="819.8" r="3.5" fill="#8000ff"/>
<circle cx="793.7" cy="809.6" r="3.5" fill="#00ffff"/>
<circle cx="797.3" cy="815.5" r="3.5" fill="#80ff00"/>
<circle cx="811.3" cy="810.0" r="3.5" fill="#8000ff"/>
<circle cx="818.6" cy="788.4" r="3.5" fill="#00ffff"/>
<circle cx="821.5" cy="792.8" r="3.5" fill="#80ff00"/>
<path d="M821.9,788.0 L828.5,794.6 M828.5,788.0 L821.9,794.6" fill="none" stroke="#80ff00" stroke-width="2.8"/>
<circle cx="833.2" cy="800.8" r="3.5" fill="#8000ff"/>
<path d="M827.0,777.7 L833.6,784.3 M833.6,777.7 L827.0,784.3" fill="none" stroke="#80ff00" stroke-width="2.8"/>
<circle cx="834.7" cy="779.6" r="3.5" fill="#8000ff"/>
<circle cx="836.1" cy="773.0" r="3.5" fill="#00ffff"/>
<circle cx="838.3" cy="784.0" r="3.5" fill="#80ff00"/>
<circle cx="841.3" cy="777.4" r="3.5" fill="#80ff00"/>
<circle cx="844.2" cy="773.0" r="3.5" fill="#80ff00"/>
<circle cx="851.5" cy="766.4" r="3.5" fill="#8000ff"/>
<circle cx="853.0" cy="764.2" r="3.5" fill="#0040ff"/>
<circle cx="852.3" cy="762.0" r="3.5" fill="#80ff00"/>
<path d="M855.5,751.4 L862.1,758.0 M862.1,751.4 L855.5,758.0" fill="none" stroke="#80ff00" stroke-width="2.8"/>
<circle cx="863.7" cy="758.6" r="3.5" fill="#8000ff"/>
<circle cx="869.8" cy="749.6" r="3.5" fill="#0040ff"/>
<circle cx="871.3" cy="742.2" r="3.5" fill="#00ffff"/>
<circle cx="877.1" cy="735.6" r="3.5" fill="#00ffff"/>
<path d="M876.8,731.6 L883.4,738.2 M883.4,731.6 L876.8,738.2" fill="none" stroke="#80ff00" stroke-width="2.8"/>
<circle cx="881.5" cy="737.8" r="3.5" fill="#8000ff"/>
<circle cx="885.2" cy="744.4" r="3.5" fill="#8000ff"/>
<circle cx="893.3" cy="756.9" r="3.5" fill="#80ff00"/>
<circle cx="894.7" cy="767.1" r="3.5" fill="#8000ff"/>
<circle cx="885.5" cy="744.9" r="3.5" fill="#8000ff"/>
<circle cx="893.7" cy="756.9" r="3.5" fill="#80ff00"/>
<circle cx="899.8" cy="738.8" r="3.5" fill="#80ff00"/>
<circle cx="901.4" cy="737.7" r="3.5" fill="#80ff00"/>
<circle cx="894.3" cy="722.4" r="3.5" fill="#8000ff"/>
<path d="M893.2,726.7 L899.8,733.3 M899.8,726.7 L893.2,733.3" fill="none" stroke="#0040ff" stroke-width="2.8"/>
<path d="M896.5,722.9 L903.1,729.5 M903.1,722.9 L896.5,729.5" fill="none" stroke="#ffbf00" stroke-width="2.8"/>
<circle cx="899.8" cy="717.4" r="3.5" fill="#00ffff"/>
<circle cx="926.1" cy="746.5" r="3.5" fill="#80ff00"/>
<circle cx="952.5" cy="741.0" r="3.5" fill="#8000ff"/>
<path d="M914.0,705.9 L920.6,712.5 M920.6,705.9 L914.0,712.5" fill="none" stroke="#0040ff" stroke-width="2.8"/>
<path d="M913.5,704.2 L920.1,710.8 M920.1,704.2 L913.5,710.8" fill="none" stroke="#00ff40" stroke-width="2.8"/>
<circle cx="922.3" cy="706.4" r="3.5" fill="#00ff40"/>
<circle cx="921.7" cy="712.5" r="3.5" fill="#80ff00"/>
<circle cx="944.8" cy="712.5" r="3.5" fill="#80ff00"/>
<circle cx="951.2" cy="721.0" r="3.5" fill="#80ff00"/>
<circle cx="934.4" cy="695.8" r="3.5" fill="#ffbf00"/>
<circle cx="936.0" cy="686.1" r="3.5" fill="#00ffff"/>
<circle cx="952.5" cy="681.2" r="3.5" fill="#0040ff"/>
<circle cx="961.8" cy="683.9" r="3.5" fill="#80ff00"/>
<circle cx="952.5" cy="671.3" r="3.5" fill="#00ffff"/>
<circle cx="955.8" cy="673.5" r="3.5" fill="#80ff00"/>
<path d="M957.4,664.2 L964.0,670.8 M964.0,664.2 L957.4,670.8" fill="none" stroke="#0040ff" stroke-width="2.8"/>
<circle cx="959.1" cy="674.0" r="3.5" fill="#ffbf00"/>
<circle cx="981.0" cy="681.7" r="3.5" fill="#80ff00"/>
<circle cx="983.8" cy="677.9" r="3.5" fill="#80ff00"/>
<circle cx="995.3" cy="669.1" r="3.5" fill="#80ff00"/>
<path d="M975.0,651.0 L981.6,657.6 M981.6,651.0 L975.0,657.6" fill="none" stroke="#8000ff" stroke-width="2.8"/>
<path d="M982.1,652.1 L988.7,658.7 M988.7,652.1 L982.1,658.7" fill="none" stroke="#ffbf00" stroke-width="2.8"/>
<circle cx="989.8" cy="651.0" r="3.5" fill="#ffbf00"/>
<circle cx="992.5" cy="644.9" r="3.5" fill="#0040ff"/>
<circle cx="1002.8" cy="639.2" r="3.5" fill="#ffbf00"/>
<circle cx="1005.3" cy="633.7" r="3.5" fill="#0040ff"/>
<circle cx="1008.8" cy="635.7" r="3.5" fill="#0040ff"/>
<circle cx="1019.8" cy="629.8" r="3.5" fill="#ffbf00"/>
<path d="M1016.0,610.1 L1022.6,616.7 M1022.6,610.1 L1016.0,616.7" fill="none" stroke="#00ffff" stroke-width="2.8"/>
<circle cx="1027.0" cy="608.2" r="3.5" fill="#8000ff"/>
<path d="M1025.0,646.9 L1031.6,653.5 M1031.6,646.9 L1025.0,653.5" fill="none" stroke="#8000ff" stroke-width="2.8"/>
<circle cx="1024.3" cy="675.4" r="3.5" fill="#8000ff"/>
<circle cx="1032.2" cy="680.4" r="3.5" fill="#80ff00"/>
<circle cx="1038.7" cy="676.7" r="3.5" fill="#80ff00"/>
<path d="M1043.1,602.9 L1049.7,609.5 M1049.7,602.9 L1043.1,609.5" fill="none" stroke="#00ff40" stroke-width="2.8"/>
<circle cx="1053.0" cy="606.8" r="3.5" fill="#80ff00"/>
<path d="M1042.0,624.9 L1048.6,631.5 M1048.6,624.9 L1042.0,631.5" fill="none" stroke="#00ff40" stroke-width="2.8"/>
<path d="M1052.2,620.0 L1058.8,626.6 M1058.8,620.0 L1052.2,626.6" fill="none" stroke="#8000ff" stroke-width="2.8"/>
<circle cx="1059.9" cy="657.3" r="3.5" fill="#80ff00"/>
<circle cx="1052.3" cy="591.1" r="3.5" fill="#ffbf00"/>
<circle cx="1059.9" cy="595.0" r="3.5" fill="#0040ff"/>
<path d="M1053.6,597.8 L1060.2,604.4 M1060.2,597.8 L1053.6,604.4" fill="none" stroke="#0040ff" stroke-width="2.8"/>
<path d="M1061.0,594.4 L1067.6,601.0 M1067.6,594.4 L1061.0,601.0" fill="none" stroke="#ffbf00" stroke-width="2.8"/>
<path d="M1085.2,619.2 L1091.8,625.8 M1091.8,619.2 L1085.2,625.8" fill="none" stroke="#ffbf00" stroke-width="2.8"/>
<circle cx="1101.0" cy="579.3" r="3.5" fill="#00ff40"/>
<path d="M1094.8,552.5 L1101.4,559.1 M1101.4,552.5 L1094.8,559.1" fill="none" stroke="#0040ff" stroke-width="2.8"/>
<circle cx="1105.0" cy="554.2" r="3.5" fill="#ff00bf"/>
<circle cx="1109.4" cy="545.4" r="3.5" fill="#ffbf00"/>
<circle cx="1110.7" cy="549.8" r="3.5" fill="#ffbf00"/>
<circle cx="1119.0" cy="537.7" r="3.5" fill="#00ff40"/>
<circle cx="1122.3" cy="537.7" r="3.5" fill="#ff00bf"/>
<path d="M1126.1,538.8 L1132.7,545.4 M1132.7,538.8 L1126.1,545.4" fill="none" stroke="#0040ff" stroke-width="2.8"/>
<circle cx="1128.3" cy="541.0" r="3.5" fill="#ffbf00"/>
<circle cx="1133.8" cy="530.0" r="3.5" fill="#ffbf00"/>
<circle cx="1135.5" cy="543.8" r="3.5" fill="#ffbf00"/>
<path d="M1126.7,530.0 L1133.3,536.6 M1133.3,530.0 L1126.7,536.6" fill="none" stroke="#ffbf00" stroke-width="2.8"/>
<circle cx="1142.8" cy="525.1" r="3.5" fill="#00ff40"/>
<circle cx="1143.1" cy="531.1" r="3.5" fill="#ff00bf"/>
<circle cx="1148.8" cy="532.0" r="3.5" fill="#ffbf00"/>
<path d="M1160.2,518.0 L1166.8,524.6 M1166.8,518.0 L1160.2,524.6" fill="none" stroke="#ff00bf" stroke-width="2.8"/>
<circle cx="1169.8" cy="514.7" r="3.5" fill="#0040ff"/>
<circle cx="1177.2" cy="497.3" r="3.5" fill="#ff00bf"/>
<path d="M1188.2,480.1 L1194.8,486.7 M1194.8,480.1 L1188.2,486.7" fill="none" stroke="#ff00bf" stroke-width="2.8"/>
<circle cx="1195.8" cy="477.3" r="3.5" fill="#0040ff"/>
<path d="M1197.3,477.3 L1203.9,483.9 M1203.9,477.3 L1197.3,483.9" fill="none" stroke="#00ff40" stroke-width="2.8"/>
<circle cx="1207.4" cy="473.5" r="3.5" fill="#0040ff"/>
<path d="M1205.2,482.3 L1211.8,488.9 M1211.8,482.3 L1205.2,488.9" fill="none" stroke="#00ff40" stroke-width="2.8"/>
<circle cx="1201.5" cy="492.7" r="3.5" fill="#ffbf00"/>
<circle cx="1201.5" cy="495.5" r="3.5" fill="#ffbf00"/>
<circle cx="1215.6" cy="458.1" r="3.5" fill="#ff00bf"/>
<circle cx="1229.0" cy="468.0" r="3.5" fill="#ffbf00"/>
<circle cx="1236.0" cy="448.7" r="3.5" fill="#0040ff"/>
<circle cx="1255.8" cy="446.5" r="3.5" fill="#ff00bf"/>
<circle cx="1265.7" cy="452.0" r="3.5" fill="#00ff40"/>
<circle cx="1264.2" cy="438.8" r="3.5" fill="#ffbf00"/>
<circle cx="1265.9" cy="436.6" r="3.5" fill="#ffbf00"/>
<path d="M1267.2,430.0 L1273.8,436.6 M1273.8,430.0 L1267.2,436.6" fill="none" stroke="#ffbf00" stroke-width="2.8"/>
<path d="M1279.3,433.1 L1285.9,439.7 M1285.9,433.1 L1279.3,439.7" fill="none" stroke="#8000ff" stroke-width="2.8"/>
<circle cx="1284.6" cy="420.5" r="3.5" fill="#ff00bf"/>
<path d="M1291.1,411.4 L1297.7,418.0 M1297.7,411.4 L1291.1,418.0" fill="none" stroke="#ffbf00" stroke-width="2.8"/>
<circle cx="1292.0" cy="407.2" r="3.5" fill="#0040ff"/>
<circle cx="1291.1" cy="402.6" r="3.5" fill="#0040ff"/>
<circle cx="1287.8" cy="402.0" r="3.5" fill="#ffbf00"/>
<circle cx="1304.3" cy="404.2" r="3.5" fill="#ff00bf"/>
<circle cx="1309.3" cy="399.3" r="3.5" fill="#ffbf00"/>
<circle cx="1310.4" cy="388.9" r="3.5" fill="#ffbf00"/>
<circle cx="1325.7" cy="376.8" r="3.5" fill="#ffbf00"/>
<circle cx="1329.6" cy="384.1" r="3.5" fill="#0040ff"/>
<circle cx="1345.3" cy="372.0" r="3.5" fill="#0040ff"/>
<circle cx="1357.3" cy="358.7" r="3.5" fill="#ffbf00"/>
<path d="M1354.0,355.4 L1360.6,362.0 M1360.6,355.4 L1354.0,362.0" fill="none" stroke="#ffbf00" stroke-width="2.8"/>
<circle cx="1367.4" cy="351.2" r="3.5" fill="#ff00bf"/>
<circle cx="1367.2" cy="349.4" r="3.5" fill="#ffbf00"/>
<path d="M1379.2,334.2 L1385.8,340.8 M1385.8,334.2 L1379.2,340.8" fill="none" stroke="#ff00bf" stroke-width="2.8"/>
<circle cx="1378.2" cy="340.6" r="3.5" fill="#0040ff"/>
<circle cx="1379.3" cy="337.6" r="3.5" fill="#ffbf00"/>
<path d="M1381.3,342.0 L1387.9,348.6 M1387.9,342.0 L1381.3,348.6" fill="none" stroke="#ff00bf" stroke-width="2.8"/>
<circle cx="1430.7" cy="304.4" r="3.5" fill="#ff00bf"/>
<circle cx="1454.2" cy="272.7" r="3.5" fill="#0040ff"/>
<path d="M655.9,925.8 L662.5,932.4 M662.5,925.8 L655.9,932.4" fill="none" stroke="#ff0000" stroke-width="2.8"/>
<path d="M692.9,894.3 L699.5,900.9 M699.5,894.3 L692.9,900.9" fill="none" stroke="#ff0000" stroke-width="2.8"/>
<circle cx="698.9" cy="893.8" r="3.5" fill="#ff0000"/>
<circle cx="702.3" cy="890.4" r="3.5" fill="#ff0000"/>
<circle cx="705.8" cy="887.0" r="3.5" fill="#ff0000"/>
<circle cx="709.2" cy="883.5" r="3.5" fill="#ff0000"/>
<circle cx="712.0" cy="881.1" r="3.5" fill="#ff0000"/>
<circle cx="700.5" cy="892.0" r="3.5" fill="#ff0000"/>
<circle cx="704.0" cy="888.6" r="3.5" fill="#ff0000"/>
<circle cx="707.5" cy="885.3" r="3.5" fill="#ff0000"/>
<path d="M696.2,891.2 L702.8,897.8 M702.8,891.2 L696.2,897.8" fill="none" stroke="#ff0000" stroke-width="2.8"/>
<path d="M699.7,888.2 L706.3,894.8 M706.3,888.2 L699.7,894.8" fill="none" stroke="#ff0000" stroke-width="2.8"/>
<path d="M703.7,883.2 L710.3,889.8 M710.3,883.2 L703.7,889.8" fill="none" stroke="#ff0000" stroke-width="2.8"/>
<path d="M710.7,880.9 L717.3,887.5 M717.3,880.9 L710.7,887.5" fill="none" stroke="#ff0000" stroke-width="2.8"/>
<circle cx="717.4" cy="876.7" r="3.5" fill="#ff0000"/>
<circle cx="722.9" cy="873.9" r="3.5" fill="#ff0000"/>
<path d="M726.5,865.1 L733.1,871.7 M733.1,865.1 L726.5,871.7" fill="none" stroke="#ff0000" stroke-width="2.8"/>
<circle cx="733.2" cy="864.3" r="3.5" fill="#ff0000"/>
<circle cx="731.5" cy="866.5" r="3.5" fill="#ff0000"/>
<circle cx="740.8" cy="856.8" r="3.5" fill="#ff0000"/>
<circle cx="744.2" cy="853.3" r="3.5" fill="#ff0000"/>
<circle cx="747.0" cy="850.5" r="3.5" fill="#ff0000"/>
<path d="M747.1,842.5 L753.7,849.1 M753.7,842.5 L747.1,849.1" fill="none" stroke="#ff0000" stroke-width="2.8"/>
<path d="M751.2,845.2 L757.8,851.8 M757.8,845.2 L751.2,851.8" fill="none" stroke="#ff0000" stroke-width="2.8"/>
<circle cx="768.2" cy="833.8" r="3.5" fill="#ff0000"/>
<circle cx="773.9" cy="827.9" r="3.5" fill="#ff0000"/>
<circle cx="778.3" cy="824.2" r="3.5" fill="#ff0000"/>
<circle cx="783.4" cy="819.8" r="3.5" fill="#ff0000"/>
<circle cx="795.9" cy="809.2" r="3.5" fill="#ff0000"/>
<circle cx="801.7" cy="804.5" r="3.5" fill="#ff0000"/>
<circle cx="802.5" cy="802.3" r="3.5" fill="#ff0000"/>
<circle cx="810.5" cy="796.4" r="3.5" fill="#ff0000"/>
<circle cx="815.6" cy="792.0" r="3.5" fill="#ff0000"/>
<circle cx="822.2" cy="786.2" r="3.5" fill="#ff0000"/>
<circle cx="825.9" cy="781.8" r="3.5" fill="#ff0000"/>
<circle cx="843.5" cy="767.9" r="3.5" fill="#ff0000"/>
<circle cx="853.0" cy="759.0" r="3.5" fill="#ff0000"/>
<circle cx="873.9" cy="740.8" r="3.5" fill="#ff0000"/>
<path d="M892.6,718.0 L899.2,724.6 M899.2,718.0 L892.6,724.6" fill="none" stroke="#ff0000" stroke-width="2.8"/>
<circle cx="898.1" cy="719.1" r="3.5" fill="#ff0000"/>
<circle cx="711.0" cy="880.0" r="3.5" fill="#ff0000"/>
<circle cx="715.5" cy="878.0" r="3.5" fill="#ff0000"/>
<circle cx="726.0" cy="870.5" r="3.5" fill="#ff0000"/>
<circle cx="737.0" cy="860.5" r="3.5" fill="#ff0000"/>
</g>
<rect x="1603.5" y="174.5" width="198" height="883" fill="#f0f0f0" stroke="#a0a0a0" stroke-width="1"/>
<line x1="1604.5" y1="175.5" x2="1800.5" y2="175.5" stroke="#ffffff" stroke-width="1"/>
<line x1="1604.5" y1="175.5" x2="1604.5" y2="1056.5" stroke="#ffffff" stroke-width="1"/>
<line x1="1800.5" y1="175.5" x2="1800.5" y2="1056" stroke="#c8c8c8" stroke-width="1"/>
<text x="1608.1" y="195.9" font-size="11.5" font-weight="bold" fill="#000" font-family="Liberation Sans" textLength="21.2" lengthAdjust="spacingAndGlyphs">Plot</text>
<circle cx="1614.5" cy="216.3" r="6" fill="#ffffff" stroke="#333" stroke-width="1"/>
<text x="1624.8" y="221.2" font-size="11" font-weight="normal" fill="#000" font-family="Liberation Sans" textLength="22.2" lengthAdjust="spacingAndGlyphs">Data</text>
<circle cx="1614.5" cy="238.5" r="6" fill="#ffffff" stroke="#333" stroke-width="1"/>
<circle cx="1614.5" cy="238.5" r="3.3" fill="#333"/>
<text x="1624.8" y="243.0" font-size="11" font-weight="normal" fill="#000" font-family="Liberation Sans" textLength="84.2" lengthAdjust="spacingAndGlyphs">Model predictions</text>
<rect x="1628.5" y="251.5" width="160" height="44.5" fill="#ffffff" stroke="#a0a0a0" stroke-width="1" rx="1.5"/>
<circle cx="1645.3" cy="263.8" r="3.6" fill="#000"/>
<path d="M1642,280.7 L1648.6,287.3 M1648.6,280.7 L1642,287.3" fill="none" stroke="#000" stroke-width="2.9"/>
<text x="1666.2" y="268.7" font-size="12" font-weight="normal" fill="#000" font-family="Liberation Sans" textLength="39.1" lengthAdjust="spacingAndGlyphs">Correct</text>
<text x="1666.2" y="288.5" font-size="12" font-weight="normal" fill="#000" font-family="Liberation Sans" textLength="46.2" lengthAdjust="spacingAndGlyphs">Incorrect</text>
<rect x="1764.5" y="259.5" width="12" height="12" fill="#ffffff" stroke="#333333" stroke-width="1"/>
<path d="M1766.5,265.5 L1769.5,268.5 L1774.5,262" fill="none" stroke="#333333" stroke-width="1.1"/>
<rect x="1764.5" y="279.5" width="12" height="12" fill="#ffffff" stroke="#333333" stroke-width="1"/>
<path d="M1766.5,285.5 L1769.5,288.5 L1774.5,282" fill="none" stroke="#333333" stroke-width="1.1"/>
<line x1="1607" y1="309.5" x2="1799" y2="309.5" stroke="#cfcfcf" stroke-width="1"/>
<line x1="1607" y1="410.5" x2="1799" y2="410.5" stroke="#cfcfcf" stroke-width="1"/>
<text x="1608.0" y="329.7" font-size="11.5" font-weight="bold" fill="#000" font-family="Liberation Sans" textLength="57.7" lengthAdjust="spacingAndGlyphs">Predictors</text>
<text x="1611.2" y="357.1" font-size="11.5" font-weight="normal" fill="#333" font-family="Liberation Sans" textLength="11.2" lengthAdjust="spacingAndGlyphs">X:</text>
<text x="1611.2" y="389.2" font-size="11.5" font-weight="normal" fill="#333" font-family="Liberation Sans" textLength="11.7" lengthAdjust="spacingAndGlyphs">Y:</text>
<rect x="1631.5" y="342.5" width="165" height="21" fill="#ffffff" stroke="#a5a5a5" stroke-width="1"/>
<rect x="1781" y="343.0" width="15" height="20" fill="#dddddd"/>
<path d="M1785,351.0 L1788.5,354.5 L1792,351.0" fill="none" stroke="#555" stroke-width="1"/>
<text x="1634.4" y="357.8" font-size="11.5" font-weight="normal" fill="#000" font-family="Liberation Sans" textLength="141.0" lengthAdjust="spacingAndGlyphs">flow_stats/Data_Clearance...</text>
<rect x="1631.5" y="374.5" width="165" height="21" fill="#ffffff" stroke="#a5a5a5" stroke-width="1"/>
<rect x="1781" y="375.0" width="15" height="20" fill="#dddddd"/>
<path d="M1785,383.0 L1788.5,386.5 L1792,383.0" fill="none" stroke="#555" stroke-width="1"/>
<text x="1634.4" y="389.8" font-size="11.5" font-weight="normal" fill="#000" font-family="Liberation Sans" textLength="139.8" lengthAdjust="spacingAndGlyphs">flow_stats/Data_CrestFactor</text>
<text x="1609.6" y="434.0" font-size="11.5" font-weight="bold" fill="#000" font-family="Liberation Sans" textLength="45.2" lengthAdjust="spacingAndGlyphs">Classes</text>
<rect x="1718" y="424.5" width="78" height="18" fill="#cccccc" stroke="#b8b8b8" stroke-width="1"/>
<text x="1724.1" y="438.0" font-size="11" font-weight="normal" fill="#8a8a8a" font-family="Liberation Sans" textLength="66.5" lengthAdjust="spacingAndGlyphs">Move to Front</text>
<rect x="1607.5" y="447.5" width="191" height="533" fill="#ffffff" stroke="#828a96" stroke-width="1"/>
<rect x="1608" y="448" width="179.8" height="19.5" fill="#f0f0f0"/>
<line x1="1608" y1="467.5" x2="1787.8" y2="467.5" stroke="#a0a0a0" stroke-width="1"/>
<line x1="1647.3" y1="448" x2="1647.3" y2="467.5" stroke="#a0a0a0" stroke-width="1"/>
<line x1="1787.8" y1="448" x2="1787.8" y2="467.5" stroke="#a0a0a0" stroke-width="1"/>
<text x="1613.6" y="463.0" font-size="11.5" font-weight="normal" fill="#000" font-family="Liberation Sans" textLength="29.6" lengthAdjust="spacingAndGlyphs">Show</text>
<text x="1703.0" y="463.0" font-size="11.5" font-weight="normal" fill="#000" font-family="Liberation Sans" textLength="30.4" lengthAdjust="spacingAndGlyphs">Order</text>
<rect x="1608" y="467.8" width="179.8" height="18" fill="#ffffff"/>
<line x1="1647.5" y1="467.8" x2="1647.5" y2="485.8" stroke="#f0f0f0" stroke-width="1"/>
<rect x="1654" y="468.3" width="39" height="17" fill="#ff0000"/>
<rect x="1621.5" y="471.3" width="12" height="12" fill="#ffffff" stroke="#333333" stroke-width="1"/>
<path d="M1623.5,477.3 L1626.5,480.3 L1631.5,473.8" fill="none" stroke="#333333" stroke-width="1.1"/>
<text x="1698.0" y="481.4" font-size="11.5" font-weight="normal" fill="#000" font-family="Liberation Sans" textLength="6.2" lengthAdjust="spacingAndGlyphs">0</text>
<rect x="1608" y="485.8" width="179.8" height="18" fill="#efefef"/>
<rect x="1654" y="486.3" width="39" height="17" fill="#ffbf00"/>
<rect x="1621.5" y="489.3" width="12" height="12" fill="#ffffff" stroke="#333333" stroke-width="1"/>
<path d="M1623.5,495.3 L1626.5,498.3 L1631.5,491.8" fill="none" stroke="#333333" stroke-width="1.1"/>
<text x="1698.0" y="499.4" font-size="11.5" font-weight="normal" fill="#000" font-family="Liberation Sans" textLength="6.2" lengthAdjust="spacingAndGlyphs">1</text>
<rect x="1608" y="503.8" width="179.8" height="18" fill="#ffffff"/>
<line x1="1647.5" y1="503.8" x2="1647.5" y2="521.8" stroke="#f0f0f0" stroke-width="1"/>
<rect x="1654" y="504.3" width="39" height="17" fill="#80ff00"/>
<rect x="1621.5" y="507.3" width="12" height="12" fill="#ffffff" stroke="#333333" stroke-width="1"/>
<path d="M1623.5,513.3 L1626.5,516.3 L1631.5,509.8" fill="none" stroke="#333333" stroke-width="1.1"/>
<text x="1698.0" y="517.4" font-size="11.5" font-weight="normal" fill="#000" font-family="Liberation Sans" textLength="12.6" lengthAdjust="spacingAndGlyphs">10</text>
<rect x="1608" y="521.8" width="179.8" height="18" fill="#efefef"/>
<rect x="1654" y="522.3" width="39" height="17" fill="#00ff40"/>
<rect x="1621.5" y="525.3" width="12" height="12" fill="#ffffff" stroke="#333333" stroke-width="1"/>
<path d="M1623.5,531.3 L1626.5,534.3 L1631.5,527.8" fill="none" stroke="#333333" stroke-width="1.1"/>
<text x="1698.0" y="535.4" font-size="11.5" font-weight="normal" fill="#000" font-family="Liberation Sans" textLength="11.7" lengthAdjust="spacingAndGlyphs">11</text>
<rect x="1608" y="539.8" width="179.8" height="18" fill="#ffffff"/>
<line x1="1647.5" y1="539.8" x2="1647.5" y2="557.8" stroke="#f0f0f0" stroke-width="1"/>
<rect x="1654" y="540.3" width="39" height="17" fill="#00ffff"/>
<rect x="1621.5" y="543.3" width="12" height="12" fill="#ffffff" stroke="#333333" stroke-width="1"/>
<path d="M1623.5,549.3 L1626.5,552.3 L1631.5,545.8" fill="none" stroke="#333333" stroke-width="1.1"/>
<text x="1698.0" y="553.4" font-size="11.5" font-weight="normal" fill="#000" font-family="Liberation Sans" textLength="19.0" lengthAdjust="spacingAndGlyphs">100</text>
<rect x="1608" y="557.8" width="179.8" height="18" fill="#efefef"/>
<rect x="1654" y="558.3" width="39" height="17" fill="#0040ff"/>
<rect x="1621.5" y="561.3" width="12" height="12" fill="#ffffff" stroke="#333333" stroke-width="1"/>
<path d="M1623.5,567.3 L1626.5,570.3 L1631.5,563.8" fill="none" stroke="#333333" stroke-width="1.1"/>
<text x="1698.0" y="571.4" font-size="11.5" font-weight="normal" fill="#000" font-family="Liberation Sans" textLength="19.0" lengthAdjust="spacingAndGlyphs">101</text>
<rect x="1608" y="575.8" width="179.8" height="18" fill="#ffffff"/>
<line x1="1647.5" y1="575.8" x2="1647.5" y2="593.8" stroke="#f0f0f0" stroke-width="1"/>
<rect x="1654" y="576.3" width="39" height="17" fill="#8000ff"/>
<rect x="1621.5" y="579.3" width="12" height="12" fill="#ffffff" stroke="#333333" stroke-width="1"/>
<path d="M1623.5,585.3 L1626.5,588.3 L1631.5,581.8" fill="none" stroke="#333333" stroke-width="1.1"/>
<text x="1698.0" y="589.4" font-size="11.5" font-weight="normal" fill="#000" font-family="Liberation Sans" textLength="18.1" lengthAdjust="spacingAndGlyphs">110</text>
<rect x="1608" y="593.8" width="179.8" height="18" fill="#efefef"/>
<rect x="1654" y="594.3" width="39" height="17" fill="#ff00bf"/>
<rect x="1621.5" y="597.3" width="12" height="12" fill="#ffffff" stroke="#333333" stroke-width="1"/>
<path d="M1623.5,603.3 L1626.5,606.3 L1631.5,599.8" fill="none" stroke="#333333" stroke-width="1.1"/>
<text x="1698.0" y="607.4" font-size="11.5" font-weight="normal" fill="#000" font-family="Liberation Sans" textLength="17.3" lengthAdjust="spacingAndGlyphs">111</text>
<line x1="1607" y1="990.5" x2="1799" y2="990.5" stroke="#cfcfcf" stroke-width="1"/>
<text x="1608.1" y="1015.6" font-size="11.5" font-weight="bold" fill="#1a66cc" font-family="Liberation Sans" textLength="151.6" lengthAdjust="spacingAndGlyphs">How to investigate features</text>
<rect x="1" y="1058" width="1804" height="34" fill="#f0f0f0"/>
<rect x="20.5" y="1064.5" width="1135" height="25" fill="none" stroke="#ffffff" stroke-width="1"/>
<rect x="21.5" y="1065.5" width="1133" height="23" fill="#f0f0f0" stroke="#a3a3a3" stroke-width="1"/>
<rect x="22.5" y="1066.5" width="1131" height="21" fill="none" stroke="#ffffff" stroke-width="1"/>
<rect x="1157.5" y="1064.5" width="632" height="25" fill="none" stroke="#ffffff" stroke-width="1"/>
<rect x="1158.5" y="1065.5" width="630" height="23" fill="#f0f0f0" stroke="#a3a3a3" stroke-width="1"/>
<rect x="1159.5" y="1066.5" width="628" height="21" fill="none" stroke="#ffffff" stroke-width="1"/>
<text x="28.2" y="1082.7" font-size="12" font-weight="normal" fill="#000" font-family="Liberation Sans" textLength="44.8" lengthAdjust="spacingAndGlyphs">Data set:</text>
<text x="78.5" y="1082.7" font-size="12" font-weight="bold" fill="#000" font-family="Liberation Sans" textLength="62.8" lengthAdjust="spacingAndGlyphs">feature240</text>
<text x="166.2" y="1082.7" font-size="12" font-weight="normal" fill="#000" font-family="Liberation Sans" textLength="71.7" lengthAdjust="spacingAndGlyphs">Observations:</text>
<text x="243.0" y="1082.7" font-size="12" font-weight="bold" fill="#000" font-family="Liberation Sans" textLength="21.2" lengthAdjust="spacingAndGlyphs">240</text>
<text x="288.9" y="1082.7" font-size="12" font-weight="normal" fill="#000" font-family="Liberation Sans" textLength="22.8" lengthAdjust="spacingAndGlyphs">Size:</text>
<text x="317.0" y="1082.7" font-size="12" font-weight="bold" fill="#000" font-family="Liberation Sans" textLength="39.0" lengthAdjust="spacingAndGlyphs">108 kB</text>
<text x="381.0" y="1082.7" font-size="12" font-weight="normal" fill="#000" font-family="Liberation Sans" textLength="55.6" lengthAdjust="spacingAndGlyphs">Predictors:</text>
<text x="441.6" y="1082.7" font-size="12" font-weight="normal" fill="#0a5fc9" font-family="Liberation Sans" textLength="14.9" lengthAdjust="spacingAndGlyphs">50</text>
<line x1="442" y1="1084.6" x2="456.1" y2="1084.6" stroke="#0a5fc9" stroke-width="1"/>
<text x="480.6" y="1082.7" font-size="12" font-weight="normal" fill="#000" font-family="Liberation Sans" textLength="53.2" lengthAdjust="spacingAndGlyphs">Response:</text>
<text x="538.8" y="1082.7" font-size="12" font-weight="bold" fill="#000" font-family="Liberation Sans" textLength="54.3" lengthAdjust="spacingAndGlyphs">faultCode</text>
<text x="617.6" y="1082.7" font-size="12" font-weight="normal" fill="#000" font-family="Liberation Sans" textLength="94.7" lengthAdjust="spacingAndGlyphs">Response Classes:</text>
<text x="716.6" y="1082.7" font-size="12" font-weight="normal" fill="#0a5fc9" font-family="Liberation Sans" textLength="8.3" lengthAdjust="spacingAndGlyphs">8</text>
<line x1="717" y1="1084.6" x2="724.5" y2="1084.6" stroke="#0a5fc9" stroke-width="1"/>
<text x="1164.4" y="1082.7" font-size="12" font-weight="normal" fill="#000" font-family="Liberation Sans" textLength="55.9" lengthAdjust="spacingAndGlyphs">Validation:</text>
<text x="1225.8" y="1082.7" font-size="12" font-weight="bold" fill="#000" font-family="Liberation Sans" textLength="126.8" lengthAdjust="spacingAndGlyphs">5-fold Cross-Validation</text>
<rect x="1801" y="1081" width="1.5" height="1.5" fill="#b0a890"/>
<rect x="1797" y="1085" width="1.5" height="1.5" fill="#b0a890"/>
<rect x="1801" y="1085" width="1.5" height="1.5" fill="#b0a890"/>
<rect x="1793" y="1089" width="1.5" height="1.5" fill="#b0a890"/>
<rect x="1797" y="1089" width="1.5" height="1.5" fill="#b0a890"/>
<rect x="1801" y="1089" width="1.5" height="1.5" fill="#b0a890"/>
<line x1="1.5" y1="150" x2="1.5" y2="1091" stroke="#ffffff" stroke-width="1"/>
<line x1="1" y1="1091.5" x2="1805" y2="1091.5" stroke="#ffffff" stroke-width="1"/>
<line x1="0" y1="0.5" x2="1806" y2="0.5" stroke="#5a5a5a" stroke-width="1"/>
<line x1="0.5" y1="0" x2="0.5" y2="1093" stroke="#1a1a1a" stroke-width="1"/>
<line x1="1805.5" y1="0" x2="1805.5" y2="1093" stroke="#1a1a1a" stroke-width="1"/>
<line x1="0" y1="1092.5" x2="1806" y2="1092.5" stroke="#1a1a1a" stroke-width="1"/>
</svg>
</body></html>
